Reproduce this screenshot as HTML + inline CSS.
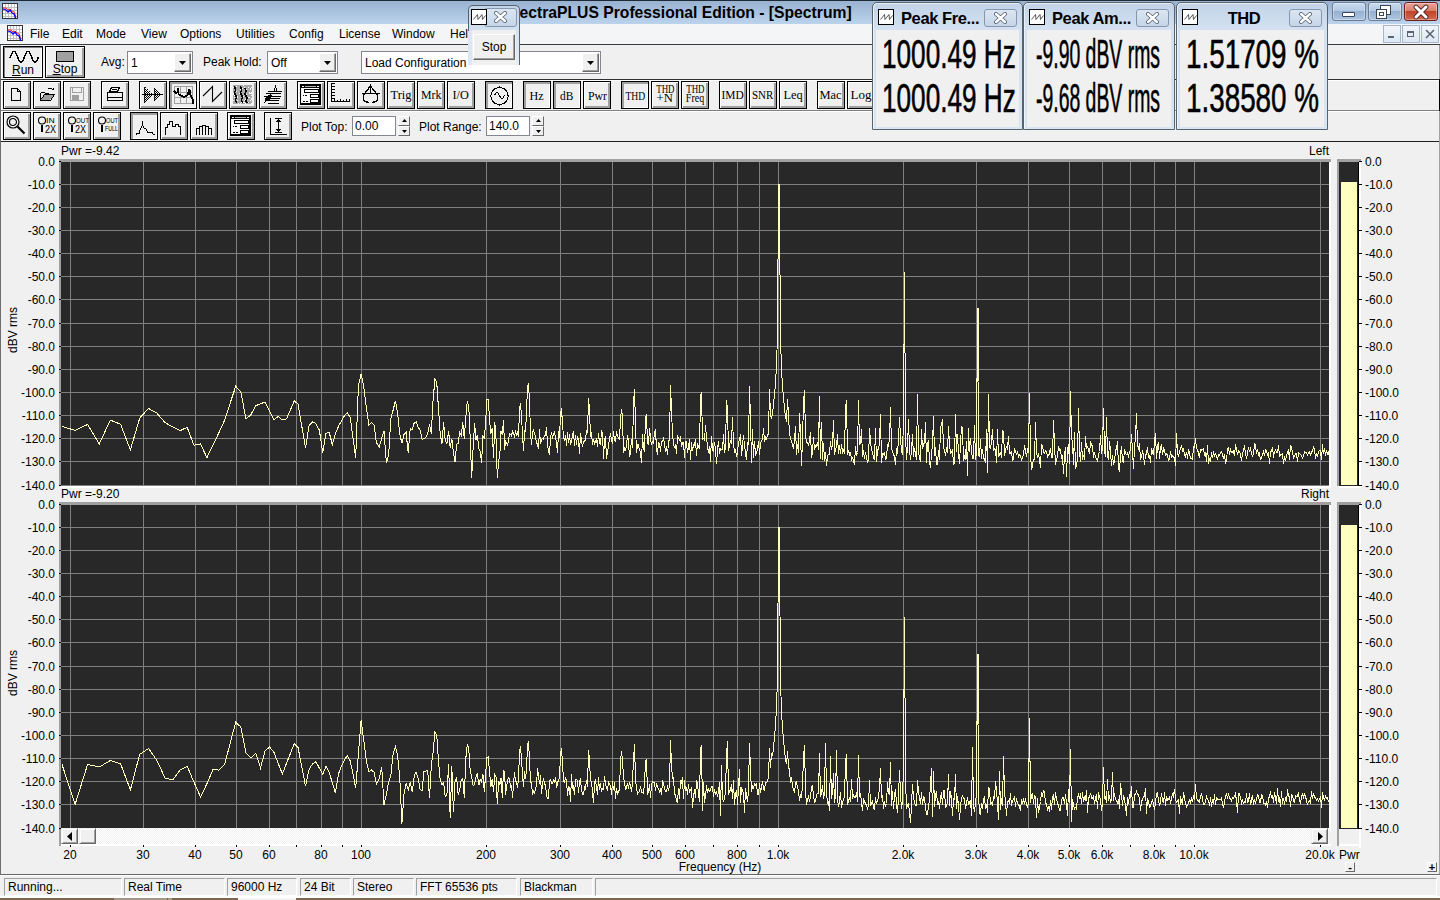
<!DOCTYPE html><html><head><meta charset="utf-8"><style>
*{margin:0;padding:0;box-sizing:border-box}
html,body{width:1440px;height:900px;overflow:hidden;background:#f0f0f0;font-family:"Liberation Sans", sans-serif;font-size:12px;color:#000;position:relative}
.a{position:absolute}
.t{position:absolute;white-space:nowrap;line-height:12px;font-size:12px}
</style></head><body>
<div class="a" style="left:0px;top:0px;width:1440px;height:1px;background:#1e2a36;"></div>
<div class="a" style="left:0px;top:1px;width:1440px;height:23px;background:linear-gradient(#98b2d0,#bcd3ec);"></div>
<svg class="a" style="left:2px;top:3px" width="16" height="16" viewBox="0 0 16 16" shape-rendering="crispEdges"><rect x="0.5" y="0.5" width="15" height="15" fill="#fff" stroke="#333"/><path d="M1 4.5h14M1 7.5h14M1 10.5h14M1 13.5h14M3.5 1v14M6.5 1v14M9.5 1v14M12.5 1v14" stroke="#c0c0c0"/><path d="M1 5l3 0 2 2 2-1 2 2 2 1 2 5" stroke="#ff2020" fill="none" shape-rendering="auto"/><path d="M1 6l3 1 2 2 2-2 2 3 2 1 2 5" stroke="#0000ff" fill="none" stroke-width="1.3" shape-rendering="auto"/></svg>
<div class="t" style="left:499.5px;top:5px;font-size:15.7px;line-height:16px;font-weight:bold">SpectraPLUS Professional Edition - [Spectrum]</div>
<div class="a" style="left:1332px;top:2px;width:34px;height:19px;background:linear-gradient(#c8daee 0,#b4cae4 45%,#95b0d0 50%,#adc5e2 100%);border:1px solid #6a7d93;border-radius:3px;box-shadow:inset 0 0 0 1px rgba(255,255,255,0.35)"></div>
<div class="a" style="left:1368px;top:2px;width:34px;height:19px;background:linear-gradient(#c8daee 0,#b4cae4 45%,#95b0d0 50%,#adc5e2 100%);border:1px solid #6a7d93;border-radius:3px;box-shadow:inset 0 0 0 1px rgba(255,255,255,0.35)"></div>
<div class="a" style="left:1404px;top:2px;width:34px;height:19px;background:linear-gradient(#e8a598 0,#d8806e 45%,#c0432a 50%,#d06a50 100%);border:1px solid #6e1c1c;border-radius:3px;box-shadow:inset 0 0 0 1px rgba(255,255,255,0.35)"></div>
<div class="a" style="left:1342px;top:12px;width:13px;height:5px;background:#fff;border:1px solid #3a4656;border-radius:1px"></div>
<div class="a" style="left:1380px;top:5px;width:11px;height:10px;border:1px solid #3a4656;background:#fff;box-shadow:inset 0 0 0 1px #fff"></div>
<div class="a" style="left:1376px;top:9px;width:11px;height:10px;border:1px solid #3a4656;background:#fff;box-shadow:inset 0 0 0 2px #fff, inset 0 0 0 3px #3a4656"></div>
<svg class="a" style="left:1412px;top:4px" width="18" height="16" viewBox="0 0 18 16"><path d="M4 3l10 10M14 3L4 13" stroke="#4a2020" stroke-width="4.6" stroke-linecap="round"/><path d="M4 3l10 10M14 3L4 13" stroke="#fff" stroke-width="3" stroke-linecap="round"/></svg>
<div class="a" style="left:0px;top:24px;width:1440px;height:20px;background:#f4f5f7;"></div>
<div class="a" style="left:0px;top:44px;width:1440px;height:1px;background:#3c3c3c;"></div>
<svg class="a" style="left:7px;top:25px" width="16" height="16" viewBox="0 0 16 16" shape-rendering="crispEdges"><rect x="0.5" y="0.5" width="15" height="15" fill="#fff" stroke="#333"/><path d="M1 4.5h14M1 7.5h14M1 10.5h14M1 13.5h14M3.5 1v14M6.5 1v14M9.5 1v14M12.5 1v14" stroke="#c0c0c0"/><path d="M1 5l3 0 2 2 2-1 2 2 2 1 2 5" stroke="#ff2020" fill="none" shape-rendering="auto"/><path d="M1 6l3 1 2 2 2-2 2 3 2 1 2 5" stroke="#0000ff" fill="none" stroke-width="1.3" shape-rendering="auto"/></svg>
<div class="t" style="left:30px;top:28px;">File</div>
<div class="t" style="left:62px;top:28px;">Edit</div>
<div class="t" style="left:96px;top:28px;">Mode</div>
<div class="t" style="left:141px;top:28px;">View</div>
<div class="t" style="left:180px;top:28px;">Options</div>
<div class="t" style="left:236px;top:28px;">Utilities</div>
<div class="t" style="left:289px;top:28px;">Config</div>
<div class="t" style="left:339px;top:28px;">License</div>
<div class="t" style="left:392px;top:28px;">Window</div>
<div class="t" style="left:450px;top:28px;">Help</div>
<div class="a" style="left:1383px;top:25px;width:18px;height:18px;background:linear-gradient(#f2f6fb,#dce7f3);border:1px solid #a6b7ca"></div>
<div class="a" style="left:1402px;top:25px;width:18px;height:18px;background:linear-gradient(#f2f6fb,#dce7f3);border:1px solid #a6b7ca"></div>
<div class="a" style="left:1421px;top:25px;width:18px;height:18px;background:linear-gradient(#f2f6fb,#dce7f3);border:1px solid #a6b7ca"></div>
<div class="a" style="left:1388px;top:36px;width:6px;height:2px;background:#5a6470"></div>
<div class="a" style="left:1407px;top:31px;width:7px;height:6px;border:1px solid #5a6470;border-top-width:2px"></div>
<svg class="a" style="left:1425px;top:29px" width="10" height="10"><path d="M1 1l8 8M9 1L1 9" stroke="#5a6470" stroke-width="1.6"/></svg>
<div class="a" style="left:0px;top:45px;width:1px;height:97px;background:#6d6d6d;"></div>
<div class="a" style="left:1px;top:45px;width:1px;height:96px;background:#fff;"></div>
<div class="a" style="left:1px;top:79px;width:1439px;height:1px;background:#303030;"></div>
<div class="a" style="left:1px;top:80px;width:1439px;height:1px;background:#fff;"></div>
<div class="a" style="left:1px;top:110px;width:1439px;height:1px;background:#808080;"></div>
<div class="a" style="left:1px;top:111px;width:1439px;height:1px;background:#fff;"></div>
<div class="a" style="left:1px;top:141px;width:1439px;height:1px;background:#202020;"></div>
<div class="a" style="left:3px;top:46px;width:40px;height:32px;background:#f0f0f0;border:1px solid #000;box-shadow:inset 2px 2px 0 #a0a0a0, inset -1px -1px 0 #fff"><div class="a" style="left:0;top:0;width:38px;height:30px;background:#f0f0f0;box-shadow:inset 1px 1px 0 #808080, inset -1px -1px 0 #fff"></div><svg class="a" style="left:0;top:0;" width="38" height="30" viewBox="0 0 38 30" shape-rendering="crispEdges" fill="none" stroke="#000" stroke-width="1"><path d="M6.00 11.05 L6.50 9.80 L7.00 8.55 L7.50 7.37 L8.00 6.31 L8.50 5.42 L9.00 4.75 L9.50 4.34 L10.00 4.20 L10.50 4.34 L11.00 4.75 L11.50 5.42 L12.00 6.31 L12.50 7.37 L13.00 8.55 L13.50 9.80 L14.00 11.05 L14.50 12.23 L15.00 13.29 L15.50 14.18 L16.00 14.85 L16.50 15.26 L17.00 15.40 L17.50 15.26 L18.00 14.85 L18.50 14.18 L19.00 13.29 L19.50 12.23 L20.00 11.05 L20.50 9.80 L21.00 8.55 L21.50 7.37 L22.00 6.31 L22.50 5.42 L23.00 4.75 L23.50 4.34 L24.00 4.20 L24.50 4.34 L25.00 4.75 L25.50 5.42 L26.00 6.31 L26.50 7.37 L27.00 8.55 L27.50 9.80 L28.00 11.05 L28.50 12.23 L29.00 13.29 L29.50 14.18 L30.00 14.85 L30.50 15.26 L31.00 15.40 L31.50 15.26 L32.00 14.85 L32.50 14.18 L33.00 13.29 L33.50 12.23 L34.00 11.05 L34.50 9.80" stroke="#000" stroke-width="1.4" fill="none"/></svg><div class="a" style="left:0;top:17px;width:38px;text-align:center;font-size:12px;line-height:12px"><u>R</u>un</div></div>
<div class="a" style="left:45px;top:46px;width:40px;height:32px;background:#f0f0f0;border:1px solid #000;box-shadow:inset 1px 1px 0 #fff, inset -2px -2px 0 #a0a0a0"><div class="a" style="left:10px;top:4px;width:18px;height:11px;background:#a0a0a0;border:1px solid #000"></div><div class="a" style="left:0;top:16px;width:38px;text-align:center;font-size:12px;line-height:12px"><u>S</u>top</div></div>
<div class="t" style="left:101px;top:56px;">Avg:</div>
<div class="t" style="left:203px;top:56px;">Peak Hold:</div>
<div class="a" style="left:127px;top:51px;width:66px;height:23px;background:#fff;border:1px solid #828790"><div class="t" style="left:3px;top:5px">1</div><div class="a" style="right:1px;top:1px;width:17px;height:19px;background:#f0f0f0;border:1px solid;border-color:#fff #696969 #696969 #fff;box-shadow:inset -1px -1px 0 #a0a0a0"></div><svg class="a" style="right:6px;top:9px" width="7" height="4"><path d="M0 0h7L3.5 4z" fill="#000"/></svg></div>
<div class="a" style="left:267px;top:51px;width:71px;height:23px;background:#fff;border:1px solid #828790"><div class="t" style="left:3px;top:5px">Off</div><div class="a" style="right:1px;top:1px;width:17px;height:19px;background:#f0f0f0;border:1px solid;border-color:#fff #696969 #696969 #fff;box-shadow:inset -1px -1px 0 #a0a0a0"></div><svg class="a" style="right:6px;top:9px" width="7" height="4"><path d="M0 0h7L3.5 4z" fill="#000"/></svg></div>
<div class="a" style="left:361px;top:51px;width:240px;height:23px;background:#fff;border:1px solid #828790"><div class="t" style="left:3px;top:5px">Load Configuration</div><div class="a" style="right:1px;top:1px;width:17px;height:19px;background:#f0f0f0;border:1px solid;border-color:#fff #696969 #696969 #fff;box-shadow:inset -1px -1px 0 #a0a0a0"></div><svg class="a" style="right:6px;top:9px" width="7" height="4"><path d="M0 0h7L3.5 4z" fill="#000"/></svg></div>
<div class="a" style="left:3px;top:81px;width:28px;height:28px;background:#f0f0f0;border:1px solid #000;box-shadow:inset 1px 1px 0 #fff, inset -2px -2px 0 #a0a0a0"><svg class="a" style="left:0;top:0;" width="26" height="26" viewBox="0 0 26 26" shape-rendering="crispEdges" fill="none" stroke="#000" stroke-width="1"><path d="M7.5 6.5h6l3 3v9h-9z" stroke="#000" stroke-width="1" fill="none"/><path d="M13.5 6.5v3h3" stroke="#000" stroke-width="1" fill="none"/></svg></div>
<div class="a" style="left:33px;top:81px;width:28px;height:28px;background:#f0f0f0;border:1px solid #000;box-shadow:inset 1px 1px 0 #fff, inset -2px -2px 0 #a0a0a0"><svg class="a" style="left:0;top:0;" width="26" height="26" viewBox="0 0 26 26" shape-rendering="crispEdges" fill="none" stroke="#000" stroke-width="1"><path d="M6.5 10.5h4l1 1h3v2" stroke="#000" stroke-width="1" fill="none"/><path d="M6.5 10.5v8h10l4-6h-10l-4 6" stroke="#000" stroke-width="1" fill="none"/><path d="M7 18l4-5.5h9l-4 5.5z" fill="#a0a0a0" stroke="none"/><path d="M13.5 7.5q2-3 5 0" stroke="#000" stroke-width="1" fill="none"/><path d="M17.5 7.5h2v-2" stroke="#000" stroke-width="1" fill="none"/></svg></div>
<div class="a" style="left:63px;top:81px;width:28px;height:28px;background:#f0f0f0;border:1px solid #000;box-shadow:inset 1px 1px 0 #fff, inset -2px -2px 0 #a0a0a0"><svg class="a" style="left:0;top:0;" width="26" height="26" viewBox="0 0 26 26" shape-rendering="crispEdges" fill="none" stroke="#000" stroke-width="1"><rect x="6.5" y="5.5" width="13" height="13" stroke="#a0a0a0"/><path d="M8.5 5.5v5h9v-5" stroke="#a0a0a0" stroke-width="1" fill="none"/><rect x="8" y="13" width="7" height="5" fill="#a0a0a0" stroke="none"/></svg></div>
<div class="a" style="left:101px;top:81px;width:28px;height:28px;background:#f0f0f0;border:1px solid #000;box-shadow:inset 1px 1px 0 #fff, inset -2px -2px 0 #a0a0a0"><svg class="a" style="left:0;top:0;" width="26" height="26" viewBox="0 0 26 26" shape-rendering="crispEdges" fill="none" stroke="#000" stroke-width="1"><path d="M9.5 5.5h8l-2 4h-8z" stroke="#000" stroke-width="1" fill="none"/><path d="M5.5 10.5h15v5h-15z" stroke="#000" stroke-width="1" fill="none"/><path d="M5.5 15.5v3h15v-3" stroke="#000" stroke-width="1" fill="none"/><path d="M10 7.5h5" stroke="#000" stroke-width="1" fill="none"/></svg></div>
<div class="a" style="left:139px;top:81px;width:28px;height:28px;background:#f0f0f0;border:1px solid #000;box-shadow:inset 1px 1px 0 #fff, inset -2px -2px 0 #a0a0a0"><svg class="a" style="left:0;top:0;" width="26" height="26" viewBox="0 0 26 26" shape-rendering="crispEdges" fill="none" stroke="#000" stroke-width="1"><path d="M5 5h1v1h-1zM4 6h1v1h-1zM5 7h1v1h-1zM7 7h1v1h-1zM4 8h1v1h-1zM6 8h1v1h-1zM5 9h1v1h-1zM7 9h1v1h-1zM9 9h1v1h-1zM4 10h1v1h-1zM6 10h1v1h-1zM8 10h1v1h-1zM5 11h1v1h-1zM7 11h1v1h-1zM9 11h1v1h-1zM11 11h1v1h-1zM4 12h1v1h-1zM6 12h1v1h-1zM8 12h1v1h-1zM10 12h1v1h-1zM5 13h1v1h-1zM7 13h1v1h-1zM9 13h1v1h-1zM11 13h1v1h-1zM4 14h1v1h-1zM6 14h1v1h-1zM8 14h1v1h-1zM10 14h1v1h-1zM5 15h1v1h-1zM7 15h1v1h-1zM9 15h1v1h-1zM4 16h1v1h-1zM6 16h1v1h-1zM8 16h1v1h-1zM5 17h1v1h-1zM7 17h1v1h-1zM4 18h1v1h-1zM6 18h1v1h-1zM5 19h1v1h-1zM4 20h1v1h-1z" fill="#000" stroke="none"/><path d="M14 6h1v1h-1zM15 7h1v1h-1zM14 8h1v1h-1zM16 8h1v1h-1zM15 9h1v1h-1zM17 9h1v1h-1zM14 10h1v1h-1zM16 10h1v1h-1zM18 10h1v1h-1zM15 11h1v1h-1zM17 11h1v1h-1zM19 11h1v1h-1zM14 12h1v1h-1zM16 12h1v1h-1zM18 12h1v1h-1zM20 12h1v1h-1zM15 13h1v1h-1zM17 13h1v1h-1zM19 13h1v1h-1zM14 14h1v1h-1zM16 14h1v1h-1zM18 14h1v1h-1zM15 15h1v1h-1zM17 15h1v1h-1zM14 16h1v1h-1zM16 16h1v1h-1zM15 17h1v1h-1zM14 18h1v1h-1z" fill="#000" stroke="none"/><path d="M2 12.5h21" stroke="#000" stroke-width="1" fill="none"/><path d="M4 5v16M14 7v12" stroke="#000" stroke-width="0.8" fill="none"/></svg></div>
<div class="a" style="left:169px;top:81px;width:28px;height:28px;background:#f0f0f0;border:1px solid #000;box-shadow:inset 2px 2px 0 #a0a0a0, inset -1px -1px 0 #fff"><svg class="a" style="left:0;top:0;" width="26" height="26" viewBox="0 0 26 26" shape-rendering="crispEdges" fill="none" stroke="#000" stroke-width="1"><path d="M4.5 4.5h18v17h-18zM10.5 4.5v17M16.5 4.5v17M4.5 10.5h18M4.5 15.5h18" stroke="#a0a0a0"/><path d="M4 9L6 11L8 10V6L8.5 12L12.5 14.5L14.5 15L17.5 13L19.5 7L20 12L23 18V22" stroke="#000" stroke-width="1.8" fill="none"/></svg></div>
<div class="a" style="left:199px;top:81px;width:28px;height:28px;background:#f0f0f0;border:1px solid #000;box-shadow:inset 1px 1px 0 #fff, inset -2px -2px 0 #a0a0a0"><svg class="a" style="left:0;top:0;" width="26" height="26" viewBox="0 0 26 26" shape-rendering="crispEdges" fill="none" stroke="#000" stroke-width="1"><path d="M3 14l9.5-9.5v15l9.5-9.5" stroke="#000" shape-rendering="auto" stroke-width="1.1" fill="none"/></svg></div>
<div class="a" style="left:229px;top:81px;width:28px;height:28px;background:#f0f0f0;border:1px solid #000;box-shadow:inset 1px 1px 0 #fff, inset -2px -2px 0 #a0a0a0"><svg class="a" style="left:0;top:0;" width="26" height="26" viewBox="0 0 26 26" shape-rendering="crispEdges" fill="none" stroke="#000" stroke-width="1"><rect x="3" y="3" width="19" height="19" fill="#a8a8a8" stroke="none"/><path d="M10 21h1v1h-1zM20 7h1v1h-1zM14 18h1v1h-1zM21 5h1v1h-1zM3 18h1v1h-1zM11 20h1v1h-1zM10 9h1v1h-1zM18 20h1v1h-1zM20 18h1v1h-1zM15 7h1v1h-1zM10 7h1v1h-1zM19 15h1v1h-1zM3 5h1v1h-1zM8 21h1v1h-1zM4 12h1v1h-1zM3 11h1v1h-1zM18 15h1v1h-1zM16 15h1v1h-1zM21 17h1v1h-1zM7 14h1v1h-1zM6 4h1v1h-1zM7 18h1v1h-1zM9 11h1v1h-1zM16 12h1v1h-1zM16 19h1v1h-1zM15 21h1v1h-1zM14 20h1v1h-1zM21 16h1v1h-1zM21 10h1v1h-1zM13 3h1v1h-1zM11 8h1v1h-1zM13 20h1v1h-1zM21 21h1v1h-1zM6 9h1v1h-1zM21 11h1v1h-1zM12 6h1v1h-1zM5 18h1v1h-1zM18 5h1v1h-1zM14 5h1v1h-1zM16 7h1v1h-1zM3 12h1v1h-1zM16 16h1v1h-1zM6 4h1v1h-1zM4 15h1v1h-1zM21 13h1v1h-1zM20 11h1v1h-1zM19 10h1v1h-1zM4 12h1v1h-1zM3 5h1v1h-1zM6 20h1v1h-1zM4 9h1v1h-1zM16 12h1v1h-1zM11 7h1v1h-1zM4 13h1v1h-1zM13 14h1v1h-1zM7 15h1v1h-1zM15 17h1v1h-1zM19 15h1v1h-1zM20 6h1v1h-1zM19 11h1v1h-1z" fill="#fff" stroke="none"/><path d="M4.5 4l1 4-1 3 2 4-1 3 1 3M10.5 4l1 4-1 3 2 4-1 3 1 3M15 6l1 3-1 3 2 4-1 3 1 2" stroke="#000" stroke-width="1.4" fill="none"/></svg></div>
<div class="a" style="left:259px;top:81px;width:28px;height:28px;background:#f0f0f0;border:1px solid #000;box-shadow:inset 1px 1px 0 #fff, inset -2px -2px 0 #a0a0a0"><svg class="a" style="left:0;top:0;" width="26" height="26" viewBox="0 0 26 26" shape-rendering="crispEdges" fill="none" stroke="#000" stroke-width="1"><path d="M8 9.5h14M6 11.5h15M4 14.5h17M5 16.5h15M6 18.5h13M8 21.5h11M14 9l1.5-4.5 1.5 5" stroke="#000" stroke-width="1" fill="none"/><path d="M4 21l2-5 2-3 3-1 1 2-2 2v2l-3 1z" fill="#000" stroke="none"/></svg></div>
<div class="a" style="left:297px;top:81px;width:28px;height:28px;background:#f0f0f0;border:1px solid #000;box-shadow:inset 1px 1px 0 #fff, inset -2px -2px 0 #a0a0a0"><svg class="a" style="left:0;top:0;" width="26" height="26" viewBox="0 0 26 26" shape-rendering="crispEdges" fill="none" stroke="#000" stroke-width="1"><path d="M2.5 2.5h20v20h-20z" stroke="#000" stroke-width="1" fill="none"/><path d="M21.5 3v19M3 21.5h19" stroke="#000" stroke-width="1" fill="none"/><rect x="3" y="3" width="19" height="3" fill="#000" stroke="none"/><path d="M4 4h2v1h-2zM19 4h2v1h-2z" fill="#fff" stroke="none"/><path d="M7 4.5h11" stroke="#fff" stroke-width="0.7" fill="none"/><rect x="4" y="6" width="17" height="15" fill="#fff" stroke="none"/><path d="M6.5 7.5h14v3h-14zM12.5 12.5h8v3h-8zM12.5 17.5h8v3h-8z" stroke="#000" stroke-width="1" fill="none"/><path d="M5 13.5h1M7 13.5h2M5 19.5h2M8 19.5h2" stroke="#000" stroke-width="1" fill="none"/></svg></div>
<div class="a" style="left:327px;top:81px;width:28px;height:28px;background:#f0f0f0;border:1px solid #000;box-shadow:inset 1px 1px 0 #fff, inset -2px -2px 0 #a0a0a0"><svg class="a" style="left:0;top:0;" width="26" height="26" viewBox="0 0 26 26" shape-rendering="crispEdges" fill="none" stroke="#000" stroke-width="1"><path d="M3.5 1v18.5h18.5M3.5 1.5h3M3.5 4.5h3M3.5 7.5h3M3.5 10.5h3M3.5 13.5h3M3.5 16.5h3M6.5 19.5v-3M9.5 19.5v-2M12.5 19.5v-3M15.5 19.5v-2M18.5 19.5v-3M21.5 19.5v-3" stroke="#000" stroke-width="1" fill="none"/></svg></div>
<div class="a" style="left:357px;top:81px;width:28px;height:28px;background:#f0f0f0;border:1px solid #000;box-shadow:inset 1px 1px 0 #fff, inset -2px -2px 0 #a0a0a0"><svg class="a" style="left:0;top:0;" width="26" height="26" viewBox="0 0 26 26" shape-rendering="crispEdges" fill="none" stroke="#000" stroke-width="1"><path d="M12.5 2v9" stroke="#000" stroke-width="1.6" fill="none"/><path d="M3.5 11.5h18" stroke="#000" stroke-width="1" fill="none"/><path d="M12.5 4L7 11Q4.5 15 5.5 18Q7 20.5 10.5 20M12.5 4L18 11Q20.5 15 19.5 18Q18 20.5 14.5 20" stroke="#000" stroke-width="1.3" fill="none"/></svg></div>
<div class="a" style="left:387px;top:81px;width:28px;height:28px;background:#f0f0f0;border:1px solid #000;box-shadow:inset 1px 1px 0 #fff, inset -2px -2px 0 #a0a0a0"><div class="a" style="left:0;top:6px;width:26px;text-align:center;line-height:13px;font-family:'Liberation Serif', serif;font-size:13px;white-space:nowrap"><span style="display:inline-block;transform:scaleX(0.955);transform-origin:center">Trig</span></div></div>
<div class="a" style="left:417px;top:81px;width:28px;height:28px;background:#f0f0f0;border:1px solid #000;box-shadow:inset 1px 1px 0 #fff, inset -2px -2px 0 #a0a0a0"><div class="a" style="left:0;top:6px;width:26px;text-align:center;line-height:13px;font-family:'Liberation Serif', serif;font-size:13px;white-space:nowrap"><span style="display:inline-block;transform:scaleX(0.913);transform-origin:center">Mrk</span></div></div>
<div class="a" style="left:447px;top:81px;width:28px;height:28px;background:#f0f0f0;border:1px solid #000;box-shadow:inset 1px 1px 0 #fff, inset -2px -2px 0 #a0a0a0"><div class="a" style="left:0;top:6px;width:26px;text-align:center;line-height:13px;font-family:'Liberation Serif', serif;font-size:13px;white-space:nowrap"><span style="display:inline-block;transform:scaleX(0.941);transform-origin:center">I/O</span></div></div>
<div class="a" style="left:523px;top:81px;width:28px;height:28px;background:#f0f0f0;border:1px solid #000;box-shadow:inset 2px 2px 0 #a0a0a0, inset -1px -1px 0 #fff"><div class="a" style="left:0;top:7px;width:26px;text-align:center;line-height:13px;font-family:'Liberation Serif', serif;font-size:13px;white-space:nowrap"><span style="display:inline-block;transform:scaleX(0.933);transform-origin:center">Hz</span></div></div>
<div class="a" style="left:553px;top:81px;width:28px;height:28px;background:#f0f0f0;border:1px solid #000;box-shadow:inset 2px 2px 0 #a0a0a0, inset -1px -1px 0 #fff"><div class="a" style="left:0;top:7px;width:26px;text-align:center;line-height:13px;font-family:'Liberation Serif', serif;font-size:13px;white-space:nowrap"><span style="display:inline-block;transform:scaleX(0.875);transform-origin:center">dB</span></div></div>
<div class="a" style="left:583px;top:81px;width:28px;height:28px;background:#f0f0f0;border:1px solid #000;box-shadow:inset 1px 1px 0 #fff, inset -2px -2px 0 #a0a0a0"><div class="a" style="left:0;top:7px;width:26px;text-align:center;line-height:13px;font-family:'Liberation Serif', serif;font-size:13px;white-space:nowrap"><span style="display:inline-block;transform:scaleX(0.909);transform-origin:center">Pwr</span></div></div>
<div class="a" style="left:621px;top:81px;width:28px;height:28px;background:#f0f0f0;border:1px solid #000;box-shadow:inset 2px 2px 0 #a0a0a0, inset -1px -1px 0 #fff"><div class="a" style="left:0;top:7px;width:26px;text-align:center;line-height:13px;font-family:'Liberation Serif', serif;font-size:13px;white-space:nowrap"><span style="display:inline-block;transform:scaleX(0.741);transform-origin:center">THD</span></div></div>
<div class="a" style="left:651px;top:81px;width:28px;height:28px;background:#f0f0f0;border:1px solid #000;box-shadow:inset 1px 1px 0 #fff, inset -2px -2px 0 #a0a0a0"><div class="a" style="left:0;top:1px;width:26px;text-align:center;line-height:12px;font-family:'Liberation Serif', serif;font-size:12px;white-space:nowrap"><span style="display:inline-block;transform:scaleX(0.741);transform-origin:center">THD</span></div><div class="a" style="left:0;top:10px;width:26px;text-align:center;line-height:12px;font-family:'Liberation Serif', serif;font-size:12px;white-space:nowrap"><span style="display:inline-block;transform:scaleX(1.059);transform-origin:center">+N</span></div></div>
<div class="a" style="left:681px;top:81px;width:28px;height:28px;background:#f0f0f0;border:1px solid #000;box-shadow:inset 1px 1px 0 #fff, inset -2px -2px 0 #a0a0a0"><div class="a" style="left:0;top:1px;width:26px;text-align:center;line-height:12px;font-family:'Liberation Serif', serif;font-size:12px;white-space:nowrap"><span style="display:inline-block;transform:scaleX(0.741);transform-origin:center">THD</span></div><div class="a" style="left:0;top:10px;width:26px;text-align:center;line-height:12px;font-family:'Liberation Serif', serif;font-size:12px;white-space:nowrap"><span style="display:inline-block;transform:scaleX(0.833);transform-origin:center">Freq</span></div></div>
<div class="a" style="left:719px;top:81px;width:28px;height:28px;background:#f0f0f0;border:1px solid #000;box-shadow:inset 1px 1px 0 #fff, inset -2px -2px 0 #a0a0a0"><div class="a" style="left:0;top:6px;width:26px;text-align:center;line-height:13px;font-family:'Liberation Serif', serif;font-size:13px;white-space:nowrap"><span style="display:inline-block;transform:scaleX(0.880);transform-origin:center">IMD</span></div></div>
<div class="a" style="left:749px;top:81px;width:28px;height:28px;background:#f0f0f0;border:1px solid #000;box-shadow:inset 1px 1px 0 #fff, inset -2px -2px 0 #a0a0a0"><div class="a" style="left:0;top:6px;width:26px;text-align:center;line-height:13px;font-family:'Liberation Serif', serif;font-size:13px;white-space:nowrap"><span style="display:inline-block;transform:scaleX(0.846);transform-origin:center">SNR</span></div></div>
<div class="a" style="left:779px;top:81px;width:28px;height:28px;background:#f0f0f0;border:1px solid #000;box-shadow:inset 1px 1px 0 #fff, inset -2px -2px 0 #a0a0a0"><div class="a" style="left:0;top:6px;width:26px;text-align:center;line-height:13px;font-family:'Liberation Serif', serif;font-size:13px;white-space:nowrap"><span style="display:inline-block;transform:scaleX(0.952);transform-origin:center">Leq</span></div></div>
<div class="a" style="left:817px;top:81px;width:28px;height:28px;background:#f0f0f0;border:1px solid #000;box-shadow:inset 1px 1px 0 #fff, inset -2px -2px 0 #a0a0a0"><div class="a" style="left:0;top:6px;width:26px;text-align:center;line-height:13px;font-family:'Liberation Serif', serif;font-size:13px;white-space:nowrap"><span style="display:inline-block;transform:scaleX(0.957);transform-origin:center">Mac</span></div></div>
<div class="a" style="left:847px;top:81px;width:28px;height:28px;background:#f0f0f0;border:1px solid #000;box-shadow:inset 1px 1px 0 #fff, inset -2px -2px 0 #a0a0a0"><div class="a" style="left:0;top:6px;width:26px;text-align:center;line-height:13px;font-family:'Liberation Serif', serif;font-size:13px;white-space:nowrap"><span style="display:inline-block;transform:scaleX(1.000);transform-origin:center">Log</span></div></div>
<div class="a" style="left:485px;top:81px;width:28px;height:28px;background:#f0f0f0;border:1px solid #000;box-shadow:inset 2px 2px 0 #a0a0a0, inset -1px -1px 0 #fff"><svg class="a" style="left:0;top:0;" width="26" height="26" viewBox="0 0 26 26" shape-rendering="crispEdges" fill="none" stroke="#000" stroke-width="1"><path d="M13.5 5.5a8.5 8.5 0 1 0 0.01 0" stroke="#000" stroke-width="1" fill="none"/><path d="M8.5 13.5q2.5-6 5 0t5 0" stroke="#000" stroke-width="1" fill="none"/><path d="M13.5 3.5v2M13.5 21.5v2" stroke="#000" stroke-width="1" fill="none"/></svg></div>
<div class="a" style="left:3px;top:112px;width:28px;height:28px;background:#f0f0f0;border:1px solid #000;box-shadow:inset 1px 1px 0 #fff, inset -2px -2px 0 #a0a0a0"><svg class="a" style="left:0;top:0;" width="26" height="26" viewBox="0 0 26 26" shape-rendering="crispEdges" fill="none" stroke="#000" stroke-width="1"><path shape-rendering="auto" d="M3 9a6 6 0 1 0 12 0a6 6 0 1 0-12 0" stroke="#000" stroke-width="1.2" fill="none"/><path shape-rendering="auto" d="M5.5 9a3.5 3.5 0 1 0 7 0a3.5 3.5 0 1 0-7 0" stroke="#000" stroke-width="1.1" fill="none"/><path shape-rendering="auto" d="M13.5 13.5l7 7" stroke="#000" stroke-width="2.2" fill="none"/></svg></div>
<div class="a" style="left:33px;top:112px;width:28px;height:28px;background:#f0f0f0;border:1px solid #000;box-shadow:inset 1px 1px 0 #fff, inset -2px -2px 0 #a0a0a0"><svg class="a" style="left:0;top:0;" width="26" height="26" viewBox="0 0 26 26" shape-rendering="crispEdges" fill="none" stroke="#000" stroke-width="1"><path shape-rendering="auto" d="M4.5 7.5a3.5 3.5 0 1 0 7 0a3.5 3.5 0 1 0-7 0" stroke="#000" stroke-width="1.1" fill="none"/><path d="M8 12v7" stroke="#000" stroke-width="2" fill="none"/><text x="12" y="10" font-family="Liberation Sans" font-size="6.5" textLength="8.6" lengthAdjust="spacingAndGlyphs" fill="#000" stroke="none">IN</text><text x="11" y="20" font-family="Liberation Sans" font-size="10" textLength="11" lengthAdjust="spacingAndGlyphs" fill="#000" stroke="none">2X</text></svg></div>
<div class="a" style="left:63px;top:112px;width:28px;height:28px;background:#f0f0f0;border:1px solid #000;box-shadow:inset 1px 1px 0 #fff, inset -2px -2px 0 #a0a0a0"><svg class="a" style="left:0;top:0;" width="26" height="26" viewBox="0 0 26 26" shape-rendering="crispEdges" fill="none" stroke="#000" stroke-width="1"><path shape-rendering="auto" d="M4.5 7.5a3.5 3.5 0 1 0 7 0a3.5 3.5 0 1 0-7 0" stroke="#000" stroke-width="1.1" fill="none"/><path d="M8 12v7" stroke="#000" stroke-width="2" fill="none"/><text x="12" y="10" font-family="Liberation Sans" font-size="6.5" textLength="12.899999999999999" lengthAdjust="spacingAndGlyphs" fill="#000" stroke="none">OUT</text><text x="11" y="20" font-family="Liberation Sans" font-size="10" textLength="11" lengthAdjust="spacingAndGlyphs" fill="#000" stroke="none">2X</text></svg></div>
<div class="a" style="left:93px;top:112px;width:28px;height:28px;background:#f0f0f0;border:1px solid #000;box-shadow:inset 1px 1px 0 #fff, inset -2px -2px 0 #a0a0a0"><svg class="a" style="left:0;top:0;" width="26" height="26" viewBox="0 0 26 26" shape-rendering="crispEdges" fill="none" stroke="#000" stroke-width="1"><path shape-rendering="auto" d="M4.5 7.5a3.5 3.5 0 1 0 7 0a3.5 3.5 0 1 0-7 0" stroke="#000" stroke-width="1.1" fill="none"/><path d="M8 12v7" stroke="#000" stroke-width="2" fill="none"/><text x="12" y="10" font-family="Liberation Sans" font-size="6.5" textLength="12" lengthAdjust="spacingAndGlyphs" fill="#000" stroke="none">OUT</text><text x="11" y="18" font-family="Liberation Sans" font-size="6.5" textLength="13" lengthAdjust="spacingAndGlyphs" fill="#000" stroke="none">FULL</text></svg></div>
<div class="a" style="left:130px;top:112px;width:28px;height:28px;background:#f0f0f0;border:1px solid #000;box-shadow:inset 2px 2px 0 #a0a0a0, inset -1px -1px 0 #fff"><svg class="a" style="left:0;top:0;" width="26" height="26" viewBox="0 0 26 26" shape-rendering="crispEdges" fill="none" stroke="#000" stroke-width="1"><path d="M5.5 22v-2h3v-2l2-4 1-2v-4M11.5 12l1.5 3 2 1 1.5 3h4l1.5 2h1.5" stroke="#000" stroke-width="1" fill="none"/></svg></div>
<div class="a" style="left:160px;top:112px;width:28px;height:28px;background:#f0f0f0;border:1px solid #000;box-shadow:inset 1px 1px 0 #fff, inset -2px -2px 0 #a0a0a0"><svg class="a" style="left:0;top:0;" width="26" height="26" viewBox="0 0 26 26" shape-rendering="crispEdges" fill="none" stroke="#000" stroke-width="1"><path d="M4.5 22v-8h2v-3h2v-3h3v5h3v-2h3v2h2v9" stroke="#000" stroke-width="1" fill="none"/></svg></div>
<div class="a" style="left:190px;top:112px;width:28px;height:28px;background:#f0f0f0;border:1px solid #000;box-shadow:inset 1px 1px 0 #fff, inset -2px -2px 0 #a0a0a0"><svg class="a" style="left:0;top:0;" width="26" height="26" viewBox="0 0 26 26" shape-rendering="crispEdges" fill="none" stroke="#000" stroke-width="1"><path d="M5.5 22v-7M8.5 22v-9M11.5 22v-10M14.5 22v-10M17.5 22v-9M20.5 22v-7M5.5 15h3v-2h3v-1h3v1h3v2h3" stroke="#000" stroke-width="1" fill="none"/></svg></div>
<div class="a" style="left:227px;top:112px;width:28px;height:28px;background:#f0f0f0;border:1px solid #000;box-shadow:inset 1px 1px 0 #fff, inset -2px -2px 0 #a0a0a0"><svg class="a" style="left:0;top:0;" width="26" height="26" viewBox="0 0 26 26" shape-rendering="crispEdges" fill="none" stroke="#000" stroke-width="1"><path d="M2.5 2.5h20v20h-20z" stroke="#000" stroke-width="1" fill="none"/><path d="M21.5 3v19M3 21.5h19" stroke="#000" stroke-width="1" fill="none"/><rect x="3" y="3" width="19" height="3" fill="#000" stroke="none"/><path d="M4 4h2v1h-2zM19 4h2v1h-2z" fill="#fff" stroke="none"/><path d="M7 4.5h11" stroke="#fff" stroke-width="0.7" fill="none"/><rect x="4" y="6" width="17" height="15" fill="#fff" stroke="none"/><path d="M6.5 7.5h14v3h-14zM12.5 12.5h8v3h-8zM12.5 17.5h8v3h-8z" stroke="#000" stroke-width="1" fill="none"/><path d="M5 13.5h1M7 13.5h2M5 19.5h2M8 19.5h2" stroke="#000" stroke-width="1" fill="none"/></svg></div>
<div class="a" style="left:264px;top:112px;width:28px;height:28px;background:#f0f0f0;border:1px solid #000;box-shadow:inset 1px 1px 0 #fff, inset -2px -2px 0 #a0a0a0"><svg class="a" style="left:0;top:0;" width="26" height="26" viewBox="0 0 26 26" shape-rendering="crispEdges" fill="none" stroke="#000" stroke-width="1"><path d="M5.5 4.5v17h16" stroke="#000" stroke-width="1" fill="none"/><path d="M9.5 5.5h7M9.5 19.5h7M13.5 6v13" stroke="#000" stroke-width="1" fill="none"/><path d="M11 9l2.5-3 2.5 3zM11 16l2.5 3 2.5-3z" fill="#000" stroke="none"/></svg></div>
<div class="t" style="left:301px;top:121px;">Plot Top:</div>
<div class="t" style="left:419px;top:121px;">Plot Range:</div>
<div class="a" style="left:352px;top:116px;width:44px;height:20px;background:#fff;border:1px solid #828790"><div class="t" style="left:2px;top:3px">0.00</div></div>
<div class="a" style="left:398px;top:116px;width:12px;height:10px;background:#f0f0f0;border:1px solid;border-color:#fff #696969 #696969 #fff"></div>
<div class="a" style="left:398px;top:126px;width:12px;height:10px;background:#f0f0f0;border:1px solid;border-color:#fff #696969 #696969 #fff"></div>
<svg class="a" style="left:402px;top:119px" width="5" height="14"><path d="M0 3h5L2.5 0zM0 11h5L2.5 14z" fill="#000"/></svg>
<div class="a" style="left:486px;top:116px;width:44px;height:20px;background:#fff;border:1px solid #828790"><div class="t" style="left:2px;top:3px">140.0</div></div>
<div class="a" style="left:532px;top:116px;width:12px;height:10px;background:#f0f0f0;border:1px solid;border-color:#fff #696969 #696969 #fff"></div>
<div class="a" style="left:532px;top:126px;width:12px;height:10px;background:#f0f0f0;border:1px solid;border-color:#fff #696969 #696969 #fff"></div>
<svg class="a" style="left:536px;top:119px" width="5" height="14"><path d="M0 3h5L2.5 0zM0 11h5L2.5 14z" fill="#000"/></svg>
<div class="t" style="left:61px;top:145px;">Pwr =-9.42</div>
<div class="t" style="right:111px;top:145px;text-align:right;">Left</div>
<div class="a" style="left:59px;top:159px;width:1272px;height:3px;background:#a0a0a0;"></div>
<div class="a" style="left:59px;top:159px;width:2px;height:327px;background:#a0a0a0;"></div>
<div class="a" style="left:1329px;top:162px;width:2px;height:324px;background:#fff;"></div>
<div class="a" style="left:61px;top:486px;width:1270px;height:2px;background:#fff;"></div>
<div class="a" style="left:61px;top:162px;width:1268px;height:324px;background:#282828;"></div>
<div class="a" style="left:61px;top:184px;width:1268px;height:1px;background:#808080;"></div>
<div class="a" style="left:61px;top:207px;width:1268px;height:1px;background:#808080;"></div>
<div class="a" style="left:61px;top:230px;width:1268px;height:1px;background:#808080;"></div>
<div class="a" style="left:61px;top:253px;width:1268px;height:1px;background:#808080;"></div>
<div class="a" style="left:61px;top:276px;width:1268px;height:1px;background:#808080;"></div>
<div class="a" style="left:61px;top:299px;width:1268px;height:1px;background:#808080;"></div>
<div class="a" style="left:61px;top:323px;width:1268px;height:1px;background:#808080;"></div>
<div class="a" style="left:61px;top:346px;width:1268px;height:1px;background:#808080;"></div>
<div class="a" style="left:61px;top:369px;width:1268px;height:1px;background:#808080;"></div>
<div class="a" style="left:61px;top:392px;width:1268px;height:1px;background:#808080;"></div>
<div class="a" style="left:61px;top:415px;width:1268px;height:1px;background:#808080;"></div>
<div class="a" style="left:61px;top:438px;width:1268px;height:1px;background:#808080;"></div>
<div class="a" style="left:61px;top:461px;width:1268px;height:1px;background:#808080;"></div>
<div class="a" style="left:61px;top:485px;width:1268px;height:1px;background:#808080;"></div>
<div class="a" style="left:70px;top:162px;width:1px;height:324px;background:#808080;"></div>
<div class="a" style="left:143px;top:162px;width:1px;height:324px;background:#808080;"></div>
<div class="a" style="left:195px;top:162px;width:1px;height:324px;background:#808080;"></div>
<div class="a" style="left:236px;top:162px;width:1px;height:324px;background:#808080;"></div>
<div class="a" style="left:269px;top:162px;width:1px;height:324px;background:#808080;"></div>
<div class="a" style="left:296px;top:162px;width:1px;height:324px;background:#808080;"></div>
<div class="a" style="left:321px;top:162px;width:1px;height:324px;background:#808080;"></div>
<div class="a" style="left:342px;top:162px;width:1px;height:324px;background:#808080;"></div>
<div class="a" style="left:361px;top:162px;width:1px;height:324px;background:#808080;"></div>
<div class="a" style="left:486px;top:162px;width:1px;height:324px;background:#808080;"></div>
<div class="a" style="left:560px;top:162px;width:1px;height:324px;background:#808080;"></div>
<div class="a" style="left:612px;top:162px;width:1px;height:324px;background:#808080;"></div>
<div class="a" style="left:652px;top:162px;width:1px;height:324px;background:#808080;"></div>
<div class="a" style="left:685px;top:162px;width:1px;height:324px;background:#808080;"></div>
<div class="a" style="left:713px;top:162px;width:1px;height:324px;background:#808080;"></div>
<div class="a" style="left:737px;top:162px;width:1px;height:324px;background:#808080;"></div>
<div class="a" style="left:759px;top:162px;width:1px;height:324px;background:#808080;"></div>
<div class="a" style="left:778px;top:162px;width:1px;height:324px;background:#808080;"></div>
<div class="a" style="left:903px;top:162px;width:1px;height:324px;background:#808080;"></div>
<div class="a" style="left:976px;top:162px;width:1px;height:324px;background:#808080;"></div>
<div class="a" style="left:1028px;top:162px;width:1px;height:324px;background:#808080;"></div>
<div class="a" style="left:1069px;top:162px;width:1px;height:324px;background:#808080;"></div>
<div class="a" style="left:1102px;top:162px;width:1px;height:324px;background:#808080;"></div>
<div class="a" style="left:1130px;top:162px;width:1px;height:324px;background:#808080;"></div>
<div class="a" style="left:1154px;top:162px;width:1px;height:324px;background:#808080;"></div>
<div class="a" style="left:1175px;top:162px;width:1px;height:324px;background:#808080;"></div>
<div class="a" style="left:1194px;top:162px;width:1px;height:324px;background:#808080;"></div>
<div class="a" style="left:1320px;top:162px;width:1px;height:324px;background:#808080;"></div>
<div class="t" style="right:1385px;top:156px;text-align:right;">0.0</div>
<div class="a" style="left:59px;top:161px;width:2px;height:1px;background:#000;"></div>
<div class="t" style="right:1385px;top:179px;text-align:right;">-10.0</div>
<div class="a" style="left:59px;top:184px;width:2px;height:1px;background:#000;"></div>
<div class="t" style="right:1385px;top:202px;text-align:right;">-20.0</div>
<div class="a" style="left:59px;top:207px;width:2px;height:1px;background:#000;"></div>
<div class="t" style="right:1385px;top:225px;text-align:right;">-30.0</div>
<div class="a" style="left:59px;top:230px;width:2px;height:1px;background:#000;"></div>
<div class="t" style="right:1385px;top:248px;text-align:right;">-40.0</div>
<div class="a" style="left:59px;top:253px;width:2px;height:1px;background:#000;"></div>
<div class="t" style="right:1385px;top:271px;text-align:right;">-50.0</div>
<div class="a" style="left:59px;top:276px;width:2px;height:1px;background:#000;"></div>
<div class="t" style="right:1385px;top:294px;text-align:right;">-60.0</div>
<div class="a" style="left:59px;top:299px;width:2px;height:1px;background:#000;"></div>
<div class="t" style="right:1385px;top:318px;text-align:right;">-70.0</div>
<div class="a" style="left:59px;top:323px;width:2px;height:1px;background:#000;"></div>
<div class="t" style="right:1385px;top:341px;text-align:right;">-80.0</div>
<div class="a" style="left:59px;top:346px;width:2px;height:1px;background:#000;"></div>
<div class="t" style="right:1385px;top:364px;text-align:right;">-90.0</div>
<div class="a" style="left:59px;top:369px;width:2px;height:1px;background:#000;"></div>
<div class="t" style="right:1385px;top:387px;text-align:right;">-100.0</div>
<div class="a" style="left:59px;top:392px;width:2px;height:1px;background:#000;"></div>
<div class="t" style="right:1385px;top:410px;text-align:right;">-110.0</div>
<div class="a" style="left:59px;top:415px;width:2px;height:1px;background:#000;"></div>
<div class="t" style="right:1385px;top:433px;text-align:right;">-120.0</div>
<div class="a" style="left:59px;top:438px;width:2px;height:1px;background:#000;"></div>
<div class="t" style="right:1385px;top:456px;text-align:right;">-130.0</div>
<div class="a" style="left:59px;top:461px;width:2px;height:1px;background:#000;"></div>
<div class="t" style="right:1385px;top:480px;text-align:right;">-140.0</div>
<div class="a" style="left:59px;top:485px;width:2px;height:1px;background:#000;"></div>
<svg class="a" style="left:61px;top:162px;overflow:hidden" width="1268" height="324" viewBox="61 162 1268 324" shape-rendering="crispEdges"><path d="M61.7 426.4 L75.1 430.4 87.6 424.5 99.3 443.9 110.3 420.1 120.6 424.3 130.4 449.9 139.7 418.1 148.5 408.4 156.9 413.1 165.0 422.5 172.7 427.0 180.1 430.7 187.2 427.3 194.0 445.3 200.6 444.0 206.9 457.7 213.1 444.9 219.0 432.5 224.7 420.1 230.3 402.7 235.7 386.3 240.9 392.0 246.0 419.2 251.0 414.4 255.8 405.7 260.5 403.8 265.1 402.0 269.6 411.4 273.9 419.6 278.2 416.4 282.4 419.9 286.4 419.0 290.4 410.0 294.3 400.7 298.1 404.3 301.8 426.2 305.5 448.2 309.1 425.4 312.6 421.8 316.0 423.8 319.4 430.3 322.7 453.1 326.0 433.4 329.2 432.2 332.3 444.8 335.4 433.8 338.5 426.3 341.5 420.9 344.4 415.7 347.3 412.6 350.2 417.3 353.0 438.0 355.7 457.5 358.4 385.6 361.1 374.0 363.8 387.2 366.4 408.4 368.9 424.7 371.5 422.8 374.0 424.9 376.4 442.7 379.3 446.9 381.7 438.4 384.0 431.0 386.4 463.2 388.7 453.9 390.9 418.1 393.2 409.8 395.4 401.0 397.6 413.1 399.8 434.4 401.9 443.2 404.0 434.6 406.1 432.4 408.2 453.2 410.2 428.8 412.3 429.6 414.3 422.6 416.2 421.9 418.2 427.3 420.1 429.9 422.0 439.3 423.9 438.8 425.8 437.4 427.7 433.9 429.5 424.4 431.3 433.7 433.1 399.8 434.9 379.5 436.7 381.8 438.4 407.1 440.1 432.4 441.9 444.4 443.6 422.0 445.2 440.5 446.9 443.7 448.6 431.2 450.2 448.1 451.8 438.6 453.4 452.6 455.0 461.8 456.6 444.5 458.2 443.3 459.7 432.3 461.3 435.5 462.8 422.5 464.3 438.8 465.8 416.9 467.3 401.3 468.8 407.5 470.2 437.6 471.7 478.1 473.1 447.9 474.6 422.9 476.0 439.7 477.4 434.8 478.8 448.6 480.2 451.6 481.6 462.9 482.9 435.4 484.3 439.0 485.6 422.2 487.0 399.4 488.3 399.1 489.6 420.6 490.9 433.9 492.2 427.7 493.5 458.3 494.8 422.5 496.0 439.0 497.3 478.3 498.6 460.8 499.8 454.8 501.0 431.5 502.3 435.0 503.5 420.0 504.7 449.6 505.5 441.1 507.5 444.9 508.5 441.0 509.5 433.4 510.5 434.2 511.5 436.2 512.5 431.1 514.5 436.7 515.5 431.8 516.5 434.9 517.5 432.6 518.5 437.2 519.5 409.5 520.5 402.7 521.5 416.9 523.5 451.0 524.5 431.0 525.5 431.6 526.5 412.8 527.5 386.6 528.5 383.1 529.5 402.0 530.5 432.0 531.5 445.4 532.5 433.9 533.5 429.1 534.5 433.9 535.5 436.1 536.5 442.8 537.5 444.4 538.5 449.4 539.5 429.3 540.5 444.1 541.5 439.9 542.5 438.3 543.5 439.1 544.5 435.4 545.5 435.6 546.5 427.5 547.5 443.1 548.5 452.0 549.5 453.9 550.5 438.8 551.5 431.7 552.5 438.9 553.5 433.9 554.5 432.3 555.5 436.8 556.5 442.3 557.5 453.3 558.5 431.5 559.5 438.0 560.5 414.1 561.5 408.5 562.5 424.0 563.5 436.6 564.5 441.1 565.5 434.7 566.5 445.8 567.5 431.9 568.5 443.1 569.5 434.3 570.5 444.9 571.5 440.6 572.5 436.0 573.5 431.1 574.5 445.6 575.5 435.5 576.5 444.7 577.5 435.6 578.5 440.4 579.5 454.1 580.5 432.9 581.5 440.6 582.5 446.5 583.5 442.1 584.5 440.7 585.5 440.7 586.5 430.0 587.5 433.4 588.5 397.8 589.5 409.8 590.5 437.3 591.5 432.0 592.5 445.0 593.5 439.1 594.5 443.8 595.5 441.7 596.5 438.0 597.5 447.0 598.5 432.8 599.5 442.4 600.5 444.6 601.5 431.0 602.5 432.5 603.5 458.9 604.5 440.7 605.5 436.4 606.5 459.2 607.5 451.6 608.5 446.0 609.5 438.4 610.5 433.0 611.5 440.7 612.5 443.6 613.5 431.5 614.5 440.4 615.5 441.0 616.5 430.7 617.5 436.4 618.5 438.1 619.5 438.9 620.5 420.2 621.5 408.8 622.5 417.6 623.5 452.8 624.5 448.3 625.5 450.3 626.5 446.4 627.5 434.6 628.5 442.0 629.5 457.2 630.5 452.5 631.5 438.9 632.5 448.0 633.5 404.2 634.5 388.9 635.5 424.1 636.5 453.3 637.5 444.7 638.5 444.8 639.5 450.3 640.5 451.8 641.5 463.4 642.5 434.5 643.5 448.7 644.5 451.6 645.5 417.6 646.5 413.8 647.5 443.0 648.5 445.2 649.5 427.8 650.5 437.6 651.5 445.4 652.5 441.6 653.5 443.3 654.5 431.5 655.5 430.2 656.5 448.2 657.5 455.1 658.5 441.6 659.5 445.0 660.5 451.7 661.5 441.4 662.5 441.3 663.5 438.6 664.5 443.6 665.5 452.0 666.5 445.9 667.5 455.2 668.5 442.2 669.5 439.0 670.5 385.2 671.5 409.9 672.5 434.6 673.5 444.0 674.5 448.2 675.5 444.3 676.5 453.8 677.5 435.7 678.5 437.5 679.5 439.8 680.5 437.6 681.5 446.5 682.5 442.8 683.5 442.2 684.5 457.5 685.5 441.3 686.5 441.6 687.5 453.1 688.5 446.2 689.5 439.2 690.5 460.1 691.5 442.4 692.5 451.1 693.5 444.3 694.5 445.1 695.5 439.0 696.5 456.2 697.5 442.9 698.5 447.1 699.5 449.0 700.5 397.0 701.5 392.1 702.5 439.2 703.5 438.3 704.5 440.2 705.5 425.2 706.5 438.9 707.5 445.5 708.5 453.4 709.5 445.7 710.5 461.8 711.5 435.7 712.5 450.5 713.5 451.2 714.5 441.8 715.5 449.4 716.5 464.0 717.5 449.6 718.5 440.6 719.5 454.0 720.5 448.5 721.5 449.8 722.5 449.6 723.5 434.3 724.5 453.0 725.5 447.8 726.5 399.9 727.5 408.7 728.5 451.0 729.5 445.3 730.5 441.4 731.5 444.0 732.5 417.1 733.5 444.7 734.5 451.3 735.5 448.8 736.5 457.3 737.5 452.3 738.5 442.2 739.5 440.4 740.5 433.8 741.5 456.4 742.5 445.9 743.5 435.1 744.5 445.6 745.5 452.9 746.5 460.4 747.5 443.0 748.5 445.0 749.5 386.3 750.5 419.6 751.5 462.6 752.5 429.2 753.5 457.7 754.5 440.9 755.5 455.2 756.5 453.4 757.5 449.1 758.5 441.3 759.5 455.2 760.5 443.6 761.5 440.8 762.5 439.8 763.5 428.0 764.5 442.1 765.5 437.3 766.5 438.7 767.5 436.0 768.5 433.2 769.5 389.1 770.5 415.1 771.5 418.4 772.5 413.4 773.5 404.8 774.5 393.9 775.5 383.6 776.5 364.7 777.5 335.3 778.5 188.3 779.5 207.2 780.5 338.9 781.5 368.5 782.5 386.2 783.5 396.8 784.5 408.6 785.5 416.6 786.5 421.8 787.5 399.1 788.5 414.2 789.5 434.3 790.5 437.4 791.5 441.8 792.5 444.2 793.5 448.7 794.5 440.2 795.5 425.7 796.5 455.1 797.5 443.9 798.5 453.4 799.5 412.6 800.5 433.7 801.5 465.7 802.5 440.0 803.5 402.6 804.5 390.4 805.5 435.6 806.5 442.6 807.5 442.3 808.5 446.4 809.5 439.7 810.5 432.0 811.5 457.9 812.5 452.3 813.5 436.7 814.5 450.3 815.5 445.6 816.5 446.7 817.5 441.7 818.5 449.7 819.5 396.3 820.5 459.3 821.5 421.9 822.5 459.5 823.5 442.7 824.5 460.6 825.5 451.7 826.5 466.0 827.5 456.0 828.5 454.3 829.5 454.1 830.5 440.7 831.5 450.0 832.5 444.7 833.5 420.1 834.5 455.0 835.5 449.7 836.5 446.4 837.5 434.3 838.5 454.3 839.5 445.2 840.5 454.2 841.5 444.3 842.5 452.4 843.5 450.2 844.5 453.8 845.5 407.8 846.5 400.3 847.5 455.3 848.5 450.5 849.5 454.4 850.5 451.7 851.5 460.7 852.5 456.8 853.5 461.4 854.5 464.8 855.5 446.1 856.5 454.7 857.5 452.5 858.5 400.2 859.5 444.8 860.5 442.8 861.5 428.7 862.5 457.2 863.5 450.2 864.5 458.7 865.5 451.6 866.5 458.1 867.5 462.1 868.5 460.2 869.5 428.0 870.5 441.5 871.5 449.9 872.5 451.7 873.5 457.7 874.5 459.7 875.5 428.2 876.5 462.0 877.5 449.8 878.5 449.6 879.5 442.2 880.5 414.2 881.5 463.3 882.5 453.8 883.5 454.5 884.5 451.7 885.5 459.4 886.5 457.8 887.5 444.9 888.5 446.4 889.5 438.6 890.5 407.5 891.5 447.8 892.5 451.5 893.5 453.9 894.5 457.2 895.5 465.1 896.5 448.3 897.5 454.4 898.5 438.4 899.5 417.3 900.5 438.3 901.5 451.8 902.5 453.6 903.5 418.8 904.5 272.1 905.5 433.2 906.5 459.5 907.5 446.8 908.5 418.7 909.5 450.6 910.5 459.6 911.5 450.8 912.5 434.5 913.5 456.7 914.5 448.3 915.5 453.1 916.5 460.0 917.5 394.3 918.5 452.8 919.5 457.2 920.5 462.2 921.5 429.3 922.5 449.2 923.5 444.0 924.5 443.6 925.5 422.0 926.5 462.6 927.5 442.9 928.5 440.5 929.5 462.5 930.5 468.0 931.5 453.8 932.5 444.4 933.5 416.4 934.5 456.2 935.5 447.4 936.5 464.2 937.5 464.8 938.5 450.5 939.5 460.1 940.5 428.2 941.5 424.6 942.5 419.2 943.5 448.1 944.5 450.5 945.5 456.2 946.5 447.5 947.5 453.1 948.5 426.3 949.5 444.5 950.5 453.2 951.5 452.9 952.5 448.9 953.5 464.3 954.5 462.5 955.5 414.3 956.5 452.1 957.5 434.4 958.5 453.4 959.5 463.8 960.5 443.8 961.5 425.9 962.5 428.2 963.5 461.1 964.5 456.4 965.5 458.4 966.5 440.6 967.5 476.3 968.5 427.8 969.5 452.3 970.5 438.3 971.5 451.3 972.5 458.0 973.5 458.0 974.5 425.2 975.5 460.0 976.5 451.4 977.5 308.4 978.5 455.0 979.5 457.1 980.5 438.7 981.5 459.0 982.5 449.3 983.5 458.9 984.5 458.9 985.5 462.5 986.5 429.4 987.5 473.2 988.5 394.1 989.5 446.0 990.5 448.8 991.5 441.1 992.5 429.5 993.5 450.7 994.5 448.6 995.5 449.5 996.5 462.8 997.5 429.2 998.5 457.4 999.5 453.7 1000.5 453.0 1001.5 457.5 1002.5 430.5 1003.5 431.4 1004.5 455.9 1005.5 450.2 1006.5 446.7 1007.5 448.8 1008.5 435.8 1009.5 453.7 1010.5 453.7 1011.5 450.8 1012.5 460.3 1013.5 458.8 1014.5 448.1 1015.5 451.0 1016.5 455.1 1017.5 451.2 1018.5 457.1 1019.5 454.8 1020.5 455.6 1021.5 459.7 1022.5 458.3 1023.5 454.0 1024.5 445.5 1025.5 451.4 1026.5 457.0 1027.5 448.4 1028.5 453.3 1029.5 392.6 1030.5 454.1 1031.5 470.1 1032.5 465.6 1033.5 459.3 1034.5 459.7 1035.5 422.4 1036.5 453.2 1037.5 457.4 1038.5 453.1 1039.5 460.2 1040.5 468.3 1041.5 443.7 1042.5 446.6 1043.5 452.1 1044.5 453.3 1045.5 450.3 1046.5 451.3 1047.5 457.0 1048.5 455.3 1049.5 453.5 1050.5 447.7 1051.5 457.7 1052.5 457.5 1053.5 420.0 1054.5 444.5 1055.5 465.0 1056.5 458.4 1057.5 457.6 1058.5 445.8 1059.5 450.3 1060.5 449.4 1061.5 458.4 1062.5 455.4 1063.5 473.5 1064.5 455.0 1065.5 447.5 1066.5 476.8 1067.5 450.3 1068.5 444.5 1069.5 463.8 1070.5 391.3 1071.5 437.1 1072.5 442.8 1073.5 464.6 1074.5 432.4 1075.5 469.4 1076.5 465.2 1077.5 459.0 1078.5 407.8 1079.5 452.2 1080.5 462.2 1081.5 442.2 1082.5 459.8 1083.5 454.7 1084.5 459.6 1085.5 435.8 1086.5 449.0 1087.5 446.8 1088.5 449.2 1089.5 454.4 1090.5 441.4 1091.5 445.2 1092.5 445.3 1093.5 458.1 1094.5 452.5 1095.5 456.9 1096.5 459.3 1097.5 461.3 1098.5 454.5 1099.5 451.5 1100.5 434.6 1101.5 454.4 1102.5 447.7 1103.5 408.5 1104.5 451.7 1105.5 456.5 1106.5 417.4 1107.5 455.6 1108.5 460.1 1109.5 441.3 1110.5 450.7 1111.5 466.2 1112.5 455.2 1113.5 464.4 1114.5 461.8 1115.5 449.9 1116.5 449.2 1117.5 441.5 1118.5 468.3 1119.5 471.9 1120.5 455.1 1121.5 445.8 1122.5 460.8 1123.5 462.1 1124.5 449.2 1125.5 453.5 1126.5 454.4 1127.5 453.2 1128.5 456.0 1129.5 452.5 1130.5 450.0 1131.5 434.1 1132.5 451.7 1133.5 468.6 1134.5 447.1 1135.5 438.0 1136.5 413.4 1137.5 445.0 1138.5 449.5 1139.5 443.0 1140.5 459.8 1141.5 455.9 1142.5 451.7 1143.5 454.6 1144.5 464.8 1145.5 454.6 1146.5 454.1 1147.5 447.0 1148.5 457.9 1149.5 454.7 1150.5 463.3 1151.5 448.4 1152.5 451.9 1153.5 455.4 1154.5 441.6 1155.5 433.0 1156.5 458.9 1157.5 447.3 1158.5 441.8 1159.5 458.6 1160.5 447.5 1161.5 445.2 1162.5 455.3 1163.5 448.2 1164.5 449.7 1165.5 455.4 1166.5 453.5 1167.5 455.1 1168.5 460.5 1169.5 459.1 1170.5 450.9 1171.5 457.0 1172.5 456.0 1173.5 456.9 1174.5 457.7 1175.5 465.6 1176.5 432.8 1177.5 453.9 1178.5 455.8 1179.5 452.0 1180.5 448.5 1181.5 444.8 1182.5 450.7 1183.5 448.8 1184.5 454.9 1185.5 456.9 1186.5 451.7 1187.5 458.9 1188.5 449.4 1189.5 453.1 1190.5 458.1 1191.5 458.1 1192.5 459.3 1193.5 446.8 1194.5 447.7 1195.5 438.1 1196.5 448.9 1197.5 449.3 1198.5 453.5 1199.5 457.9 1200.5 449.2 1201.5 450.1 1202.5 449.7 1203.5 448.7 1204.5 455.0 1205.5 452.6 1206.5 462.0 1207.5 445.5 1208.5 464.0 1209.5 459.0 1210.5 460.8 1211.5 452.6 1212.5 456.5 1213.5 452.9 1214.5 456.0 1215.5 454.3 1216.5 456.3 1217.5 459.9 1218.5 454.4 1219.5 455.2 1220.5 453.1 1221.5 452.0 1222.5 453.7 1223.5 459.1 1224.5 454.0 1225.5 463.9 1226.5 460.6 1227.5 448.9 1228.5 447.8 1229.5 454.9 1230.5 448.5 1231.5 452.6 1232.5 452.2 1233.5 451.1 1234.5 456.0 1235.5 444.0 1236.5 449.4 1237.5 455.1 1238.5 450.7 1239.5 451.6 1240.5 453.8 1241.5 461.2 1242.5 452.5 1243.5 451.5 1244.5 445.3 1245.5 453.9 1246.5 458.6 1247.5 453.0 1248.5 446.7 1249.5 452.3 1250.5 449.1 1251.5 452.9 1252.5 456.2 1253.5 453.7 1254.5 444.0 1255.5 445.3 1256.5 454.4 1257.5 449.6 1258.5 455.0 1259.5 452.9 1260.5 460.0 1261.5 457.0 1262.5 454.7 1263.5 451.7 1264.5 455.6 1265.5 450.2 1266.5 451.2 1267.5 454.5 1268.5 452.1 1269.5 463.8 1270.5 451.7 1271.5 451.9 1272.5 447.0 1273.5 457.6 1274.5 451.5 1275.5 450.0 1276.5 451.9 1277.5 452.7 1278.5 444.8 1279.5 457.3 1280.5 454.9 1281.5 454.6 1282.5 453.7 1283.5 463.7 1284.5 456.1 1285.5 460.5 1286.5 456.2 1287.5 452.1 1288.5 450.4 1289.5 459.5 1290.5 445.1 1291.5 447.4 1292.5 452.5 1293.5 457.8 1294.5 456.0 1295.5 453.5 1296.5 453.4 1297.5 461.9 1298.5 452.5 1299.5 453.5 1300.5 454.3 1301.5 455.6 1302.5 457.7 1303.5 456.1 1304.5 451.6 1305.5 452.4 1306.5 453.1 1307.5 454.9 1308.5 452.9 1309.5 451.7 1310.5 455.9 1311.5 451.3 1312.5 451.8 1313.5 446.4 1314.5 449.6 1315.5 458.9 1316.5 453.4 1317.5 456.9 1318.5 451.7 1319.5 450.3 1320.5 451.1 1321.5 460.0 1322.5 444.3 1323.5 454.3 1324.5 448.3 1325.5 456.2 1326.5 449.9 1327.5 454.6 1328.5 454.3 1329.5 447.5 1330.5 454.6 1331.5 459.0" fill="none" stroke="#ffffc0" stroke-width="1"/></svg>
<div class="a" style="left:778px;top:184px;width:2px;height:71px;background:#ffffc0;"></div>
<div class="a" style="left:977px;top:308px;width:2px;height:73px;background:#ffffc0;"></div>
<div class="a" style="left:1337px;top:159px;width:24px;height:3px;background:#a0a0a0;"></div>
<div class="a" style="left:1337px;top:159px;width:2px;height:327px;background:#a0a0a0;"></div>
<div class="a" style="left:1339px;top:162px;width:20px;height:324px;background:#282828;"></div>
<div class="a" style="left:1358px;top:162px;width:1px;height:324px;background:#000;"></div>
<div class="a" style="left:1359px;top:162px;width:2px;height:326px;background:#fff;"></div>
<div class="a" style="left:1339px;top:486px;width:22px;height:2px;background:#fff;"></div>
<div class="a" style="left:1341px;top:182px;width:16px;height:303px;background:#ffffc0;"></div>
<div class="a" style="left:1359px;top:161px;width:3px;height:1px;background:#000;"></div>
<div class="t" style="left:1365px;top:156px;">0.0</div>
<div class="a" style="left:1359px;top:184px;width:3px;height:1px;background:#000;"></div>
<div class="t" style="left:1365px;top:179px;">-10.0</div>
<div class="a" style="left:1359px;top:207px;width:3px;height:1px;background:#000;"></div>
<div class="t" style="left:1365px;top:202px;">-20.0</div>
<div class="a" style="left:1359px;top:230px;width:3px;height:1px;background:#000;"></div>
<div class="t" style="left:1365px;top:225px;">-30.0</div>
<div class="a" style="left:1359px;top:253px;width:3px;height:1px;background:#000;"></div>
<div class="t" style="left:1365px;top:248px;">-40.0</div>
<div class="a" style="left:1359px;top:276px;width:3px;height:1px;background:#000;"></div>
<div class="t" style="left:1365px;top:271px;">-50.0</div>
<div class="a" style="left:1359px;top:299px;width:3px;height:1px;background:#000;"></div>
<div class="t" style="left:1365px;top:294px;">-60.0</div>
<div class="a" style="left:1359px;top:323px;width:3px;height:1px;background:#000;"></div>
<div class="t" style="left:1365px;top:318px;">-70.0</div>
<div class="a" style="left:1359px;top:346px;width:3px;height:1px;background:#000;"></div>
<div class="t" style="left:1365px;top:341px;">-80.0</div>
<div class="a" style="left:1359px;top:369px;width:3px;height:1px;background:#000;"></div>
<div class="t" style="left:1365px;top:364px;">-90.0</div>
<div class="a" style="left:1359px;top:392px;width:3px;height:1px;background:#000;"></div>
<div class="t" style="left:1365px;top:387px;">-100.0</div>
<div class="a" style="left:1359px;top:415px;width:3px;height:1px;background:#000;"></div>
<div class="t" style="left:1365px;top:410px;">-110.0</div>
<div class="a" style="left:1359px;top:438px;width:3px;height:1px;background:#000;"></div>
<div class="t" style="left:1365px;top:433px;">-120.0</div>
<div class="a" style="left:1359px;top:461px;width:3px;height:1px;background:#000;"></div>
<div class="t" style="left:1365px;top:456px;">-130.0</div>
<div class="a" style="left:1359px;top:485px;width:3px;height:1px;background:#000;"></div>
<div class="t" style="left:1365px;top:480px;">-140.0</div>
<div class="t" style="left:-12px;top:324px;width:50px;text-align:center;transform:rotate(-90deg)">dBV rms</div>
<div class="t" style="left:61px;top:488px;">Pwr =-9.20</div>
<div class="t" style="right:111px;top:488px;text-align:right;">Right</div>
<div class="a" style="left:59px;top:502px;width:1272px;height:3px;background:#a0a0a0;"></div>
<div class="a" style="left:59px;top:502px;width:2px;height:344px;background:#a0a0a0;"></div>
<div class="a" style="left:1329px;top:505px;width:2px;height:324px;background:#fff;"></div>
<div class="a" style="left:61px;top:829px;width:1270px;height:2px;background:#fff;"></div>
<div class="a" style="left:61px;top:505px;width:1268px;height:324px;background:#282828;"></div>
<div class="a" style="left:61px;top:527px;width:1268px;height:1px;background:#808080;"></div>
<div class="a" style="left:61px;top:550px;width:1268px;height:1px;background:#808080;"></div>
<div class="a" style="left:61px;top:573px;width:1268px;height:1px;background:#808080;"></div>
<div class="a" style="left:61px;top:596px;width:1268px;height:1px;background:#808080;"></div>
<div class="a" style="left:61px;top:619px;width:1268px;height:1px;background:#808080;"></div>
<div class="a" style="left:61px;top:642px;width:1268px;height:1px;background:#808080;"></div>
<div class="a" style="left:61px;top:666px;width:1268px;height:1px;background:#808080;"></div>
<div class="a" style="left:61px;top:689px;width:1268px;height:1px;background:#808080;"></div>
<div class="a" style="left:61px;top:712px;width:1268px;height:1px;background:#808080;"></div>
<div class="a" style="left:61px;top:735px;width:1268px;height:1px;background:#808080;"></div>
<div class="a" style="left:61px;top:758px;width:1268px;height:1px;background:#808080;"></div>
<div class="a" style="left:61px;top:781px;width:1268px;height:1px;background:#808080;"></div>
<div class="a" style="left:61px;top:804px;width:1268px;height:1px;background:#808080;"></div>
<div class="a" style="left:61px;top:828px;width:1268px;height:1px;background:#808080;"></div>
<div class="a" style="left:70px;top:505px;width:1px;height:324px;background:#808080;"></div>
<div class="a" style="left:143px;top:505px;width:1px;height:324px;background:#808080;"></div>
<div class="a" style="left:195px;top:505px;width:1px;height:324px;background:#808080;"></div>
<div class="a" style="left:236px;top:505px;width:1px;height:324px;background:#808080;"></div>
<div class="a" style="left:269px;top:505px;width:1px;height:324px;background:#808080;"></div>
<div class="a" style="left:296px;top:505px;width:1px;height:324px;background:#808080;"></div>
<div class="a" style="left:321px;top:505px;width:1px;height:324px;background:#808080;"></div>
<div class="a" style="left:342px;top:505px;width:1px;height:324px;background:#808080;"></div>
<div class="a" style="left:361px;top:505px;width:1px;height:324px;background:#808080;"></div>
<div class="a" style="left:486px;top:505px;width:1px;height:324px;background:#808080;"></div>
<div class="a" style="left:560px;top:505px;width:1px;height:324px;background:#808080;"></div>
<div class="a" style="left:612px;top:505px;width:1px;height:324px;background:#808080;"></div>
<div class="a" style="left:652px;top:505px;width:1px;height:324px;background:#808080;"></div>
<div class="a" style="left:685px;top:505px;width:1px;height:324px;background:#808080;"></div>
<div class="a" style="left:713px;top:505px;width:1px;height:324px;background:#808080;"></div>
<div class="a" style="left:737px;top:505px;width:1px;height:324px;background:#808080;"></div>
<div class="a" style="left:759px;top:505px;width:1px;height:324px;background:#808080;"></div>
<div class="a" style="left:778px;top:505px;width:1px;height:324px;background:#808080;"></div>
<div class="a" style="left:903px;top:505px;width:1px;height:324px;background:#808080;"></div>
<div class="a" style="left:976px;top:505px;width:1px;height:324px;background:#808080;"></div>
<div class="a" style="left:1028px;top:505px;width:1px;height:324px;background:#808080;"></div>
<div class="a" style="left:1069px;top:505px;width:1px;height:324px;background:#808080;"></div>
<div class="a" style="left:1102px;top:505px;width:1px;height:324px;background:#808080;"></div>
<div class="a" style="left:1130px;top:505px;width:1px;height:324px;background:#808080;"></div>
<div class="a" style="left:1154px;top:505px;width:1px;height:324px;background:#808080;"></div>
<div class="a" style="left:1175px;top:505px;width:1px;height:324px;background:#808080;"></div>
<div class="a" style="left:1194px;top:505px;width:1px;height:324px;background:#808080;"></div>
<div class="a" style="left:1320px;top:505px;width:1px;height:324px;background:#808080;"></div>
<div class="t" style="right:1385px;top:499px;text-align:right;">0.0</div>
<div class="a" style="left:59px;top:504px;width:2px;height:1px;background:#000;"></div>
<div class="t" style="right:1385px;top:522px;text-align:right;">-10.0</div>
<div class="a" style="left:59px;top:527px;width:2px;height:1px;background:#000;"></div>
<div class="t" style="right:1385px;top:545px;text-align:right;">-20.0</div>
<div class="a" style="left:59px;top:550px;width:2px;height:1px;background:#000;"></div>
<div class="t" style="right:1385px;top:568px;text-align:right;">-30.0</div>
<div class="a" style="left:59px;top:573px;width:2px;height:1px;background:#000;"></div>
<div class="t" style="right:1385px;top:591px;text-align:right;">-40.0</div>
<div class="a" style="left:59px;top:596px;width:2px;height:1px;background:#000;"></div>
<div class="t" style="right:1385px;top:614px;text-align:right;">-50.0</div>
<div class="a" style="left:59px;top:619px;width:2px;height:1px;background:#000;"></div>
<div class="t" style="right:1385px;top:637px;text-align:right;">-60.0</div>
<div class="a" style="left:59px;top:642px;width:2px;height:1px;background:#000;"></div>
<div class="t" style="right:1385px;top:661px;text-align:right;">-70.0</div>
<div class="a" style="left:59px;top:666px;width:2px;height:1px;background:#000;"></div>
<div class="t" style="right:1385px;top:684px;text-align:right;">-80.0</div>
<div class="a" style="left:59px;top:689px;width:2px;height:1px;background:#000;"></div>
<div class="t" style="right:1385px;top:707px;text-align:right;">-90.0</div>
<div class="a" style="left:59px;top:712px;width:2px;height:1px;background:#000;"></div>
<div class="t" style="right:1385px;top:730px;text-align:right;">-100.0</div>
<div class="a" style="left:59px;top:735px;width:2px;height:1px;background:#000;"></div>
<div class="t" style="right:1385px;top:753px;text-align:right;">-110.0</div>
<div class="a" style="left:59px;top:758px;width:2px;height:1px;background:#000;"></div>
<div class="t" style="right:1385px;top:776px;text-align:right;">-120.0</div>
<div class="a" style="left:59px;top:781px;width:2px;height:1px;background:#000;"></div>
<div class="t" style="right:1385px;top:799px;text-align:right;">-130.0</div>
<div class="a" style="left:59px;top:804px;width:2px;height:1px;background:#000;"></div>
<div class="t" style="right:1385px;top:823px;text-align:right;">-140.0</div>
<div class="a" style="left:59px;top:828px;width:2px;height:1px;background:#000;"></div>
<svg class="a" style="left:61px;top:505px;overflow:hidden" width="1268" height="324" viewBox="61 505 1268 324" shape-rendering="crispEdges"><path d="M61.7 763.5 L75.1 804.4 87.6 764.5 99.3 767.0 110.3 760.5 120.6 763.8 130.4 789.9 139.7 754.3 148.5 748.5 156.9 760.4 165.0 778.0 172.7 779.8 180.1 770.0 187.2 766.3 194.0 782.3 200.6 797.0 206.9 783.7 213.1 769.3 219.0 770.1 224.7 764.3 230.3 742.7 235.7 722.3 240.9 727.0 246.0 753.3 251.0 758.1 255.8 753.0 260.5 767.9 265.1 750.9 269.6 747.0 273.9 752.3 278.2 763.4 282.4 774.0 286.4 763.6 290.4 753.5 294.3 743.6 298.1 747.7 301.8 766.9 305.5 786.1 309.1 769.2 312.6 763.8 316.0 761.8 319.4 768.2 322.7 774.3 326.0 766.2 329.2 772.5 332.3 782.7 335.4 792.8 338.5 773.9 341.5 766.1 344.4 760.3 347.3 755.5 350.2 760.9 353.0 774.0 355.7 788.4 358.4 753.7 361.1 720.2 363.8 740.8 366.4 761.1 368.9 771.5 371.5 770.0 374.0 772.2 376.4 784.3 379.3 778.0 381.7 766.7 384.0 805.0 386.4 793.9 388.7 781.7 390.9 775.3 393.2 752.9 395.4 746.9 397.6 755.4 399.8 778.1 401.9 823.7 404.0 794.4 406.1 783.4 408.2 789.9 410.2 782.2 412.3 792.0 414.3 775.5 416.2 772.2 418.2 778.8 420.1 789.5 422.0 790.8 423.9 771.7 425.8 771.2 427.7 770.3 429.5 798.2 431.3 765.4 433.1 752.5 434.9 732.5 436.7 734.7 438.4 759.9 440.1 779.1 441.9 784.5 443.6 782.7 445.2 796.4 446.9 794.9 448.6 764.4 450.2 817.9 451.8 766.3 453.4 812.4 455.0 782.3 456.6 777.4 458.2 794.8 459.7 789.9 461.3 779.2 462.8 778.7 464.3 797.5 465.8 758.6 467.3 743.9 468.8 749.4 470.2 770.5 471.7 776.7 473.1 785.8 474.6 784.0 476.0 777.2 477.4 773.2 478.8 785.4 480.2 779.6 481.6 782.2 482.9 773.6 484.3 792.2 485.6 774.6 487.0 757.2 488.3 756.8 489.6 772.7 490.9 787.1 492.2 779.4 493.5 792.1 494.8 774.9 496.0 777.2 497.3 804.2 498.6 781.0 499.8 785.2 501.0 777.8 502.3 797.5 503.5 770.0 504.7 773.6 505.5 794.8 507.5 780.7 508.5 777.5 509.5 778.2 510.5 788.4 511.5 784.9 512.5 797.5 514.5 771.8 515.5 781.7 516.5 781.4 517.5 787.9 518.5 778.6 519.5 752.4 520.5 745.7 521.5 759.7 523.5 787.4 524.5 771.4 525.5 778.9 526.5 770.2 527.5 745.1 528.5 741.4 529.5 760.2 530.5 781.6 531.5 783.4 532.5 793.6 533.5 791.4 534.5 793.1 535.5 788.1 536.5 785.2 537.5 768.4 538.5 775.8 539.5 784.3 540.5 775.3 541.5 794.0 542.5 784.9 543.5 778.2 544.5 783.9 545.5 785.1 546.5 795.4 547.5 798.7 548.5 798.2 549.5 780.3 550.5 779.4 551.5 783.2 552.5 783.4 553.5 780.6 554.5 783.3 555.5 776.6 556.5 787.9 557.5 783.7 558.5 779.5 559.5 778.8 560.5 754.5 561.5 748.3 562.5 763.4 563.5 779.8 564.5 783.2 565.5 777.3 566.5 780.4 567.5 795.8 568.5 786.6 569.5 788.3 570.5 802.0 571.5 774.2 572.5 788.7 573.5 786.3 574.5 795.2 575.5 779.1 576.5 779.2 577.5 780.4 578.5 792.9 579.5 781.5 580.5 779.3 581.5 789.8 582.5 794.5 583.5 794.8 584.5 786.9 585.5 788.6 586.5 780.3 587.5 786.7 588.5 749.7 589.5 760.7 590.5 780.2 591.5 782.3 592.5 792.2 593.5 803.0 594.5 783.2 595.5 779.3 596.5 787.9 597.5 794.5 598.5 777.4 599.5 790.1 600.5 783.2 601.5 792.0 602.5 788.4 603.5 789.5 604.5 775.7 605.5 783.7 606.5 788.3 607.5 790.1 608.5 781.3 609.5 784.8 610.5 785.2 611.5 794.6 612.5 781.1 613.5 789.7 614.5 782.3 615.5 799.3 616.5 787.7 617.5 794.8 618.5 791.5 619.5 789.7 620.5 761.5 621.5 751.0 622.5 760.4 623.5 776.5 624.5 783.6 625.5 789.0 626.5 788.4 627.5 782.8 628.5 789.2 629.5 781.9 630.5 785.4 631.5 791.9 632.5 781.6 633.5 759.0 634.5 744.4 635.5 779.3 636.5 788.3 637.5 794.1 638.5 792.5 639.5 791.1 640.5 786.5 641.5 791.9 642.5 792.6 643.5 793.5 644.5 782.9 645.5 762.2 646.5 758.6 647.5 793.9 648.5 792.4 649.5 784.2 650.5 797.7 651.5 785.3 652.5 781.6 653.5 782.5 654.5 782.9 655.5 790.5 656.5 783.1 657.5 786.6 658.5 788.8 659.5 791.4 660.5 789.0 661.5 795.3 662.5 781.0 663.5 783.0 664.5 789.6 665.5 791.0 666.5 791.3 667.5 786.7 668.5 789.4 669.5 786.3 670.5 740.3 671.5 764.6 672.5 778.8 673.5 777.9 674.5 793.8 675.5 795.2 676.5 800.1 677.5 803.0 678.5 787.6 679.5 798.6 680.5 780.4 681.5 782.7 682.5 777.5 683.5 799.1 684.5 780.1 685.5 790.8 686.5 786.9 687.5 794.5 688.5 784.5 689.5 792.8 690.5 789.7 691.5 788.1 692.5 807.6 693.5 796.7 694.5 789.1 695.5 798.1 696.5 780.4 697.5 783.9 698.5 794.0 699.5 801.6 700.5 749.8 701.5 745.0 702.5 810.5 703.5 782.3 704.5 802.7 705.5 796.2 706.5 785.5 707.5 792.7 708.5 789.4 709.5 790.9 710.5 789.8 711.5 786.1 712.5 786.2 713.5 797.3 714.5 788.8 715.5 794.6 716.5 791.2 717.5 796.6 718.5 791.4 719.5 782.5 720.5 816.0 721.5 764.7 722.5 798.1 723.5 802.1 724.5 797.5 725.5 792.0 726.5 754.7 727.5 740.8 728.5 795.1 729.5 790.3 730.5 790.0 731.5 784.5 732.5 798.5 733.5 780.5 734.5 804.6 735.5 794.4 736.5 789.7 737.5 805.1 738.5 786.8 739.5 768.7 740.5 803.3 741.5 787.4 742.5 791.2 743.5 792.4 744.5 812.7 745.5 787.8 746.5 795.5 747.5 802.4 748.5 789.7 749.5 742.8 750.5 769.5 751.5 791.6 752.5 786.1 753.5 788.1 754.5 783.9 755.5 785.4 756.5 782.8 757.5 794.3 758.5 794.1 759.5 783.4 760.5 792.5 761.5 786.7 762.5 781.4 763.5 789.4 764.5 790.0 765.5 782.1 766.5 782.5 767.5 781.7 768.5 775.7 769.5 748.3 770.5 768.1 771.5 752.9 772.5 756.1 773.5 747.4 774.5 736.5 775.5 726.0 776.5 707.2 777.5 677.8 778.5 530.8 779.5 549.7 780.5 681.4 781.5 711.0 782.5 728.7 783.5 738.8 784.5 751.2 785.5 759.0 786.5 764.3 787.5 751.0 788.5 766.5 789.5 770.4 790.5 783.0 791.5 777.1 792.5 786.3 793.5 789.3 794.5 792.6 795.5 784.1 796.5 781.1 797.5 787.8 798.5 790.1 799.5 801.1 800.5 795.3 801.5 796.9 802.5 786.0 803.5 757.0 804.5 744.8 805.5 790.3 806.5 804.7 807.5 800.2 808.5 795.3 809.5 802.0 810.5 796.1 811.5 787.4 812.5 785.0 813.5 795.9 814.5 802.5 815.5 801.3 816.5 794.8 817.5 793.8 818.5 793.3 819.5 752.6 820.5 796.9 821.5 792.9 822.5 785.4 823.5 798.5 824.5 792.8 825.5 743.5 826.5 791.1 827.5 804.4 828.5 800.6 829.5 811.2 830.5 756.1 831.5 799.0 832.5 792.1 833.5 773.5 834.5 802.7 835.5 796.4 836.5 750.0 837.5 799.8 838.5 806.6 839.5 800.9 840.5 792.1 841.5 807.6 842.5 802.0 843.5 799.7 844.5 796.9 845.5 761.7 846.5 754.3 847.5 805.2 848.5 801.6 849.5 797.2 850.5 801.8 851.5 778.7 852.5 799.2 853.5 795.4 854.5 797.6 855.5 797.8 856.5 792.4 857.5 802.0 858.5 755.2 859.5 797.4 860.5 793.3 861.5 802.9 862.5 811.3 863.5 798.2 864.5 801.4 865.5 803.6 866.5 805.2 867.5 808.8 868.5 807.5 869.5 780.0 870.5 806.3 871.5 803.5 872.5 799.7 873.5 808.6 874.5 809.2 875.5 797.5 876.5 804.4 877.5 800.0 878.5 797.6 879.5 786.9 880.5 768.3 881.5 798.3 882.5 795.1 883.5 808.6 884.5 801.4 885.5 807.2 886.5 803.5 887.5 782.0 888.5 792.9 889.5 795.0 890.5 761.7 891.5 805.8 892.5 791.4 893.5 809.3 894.5 794.9 895.5 789.4 896.5 804.5 897.5 813.1 898.5 797.2 899.5 769.6 900.5 793.9 901.5 809.3 902.5 800.9 903.5 764.2 904.5 617.4 905.5 777.7 906.5 809.0 907.5 805.0 908.5 803.8 909.5 812.6 910.5 823.4 911.5 804.8 912.5 784.2 913.5 797.4 914.5 802.7 915.5 805.8 916.5 805.9 917.5 780.2 918.5 790.8 919.5 798.1 920.5 803.7 921.5 791.7 922.5 805.3 923.5 796.1 924.5 798.6 925.5 806.4 926.5 814.7 927.5 814.3 928.5 805.2 929.5 800.4 930.5 784.6 931.5 768.3 932.5 817.2 933.5 770.7 934.5 807.0 935.5 794.6 936.5 790.9 937.5 804.8 938.5 801.1 939.5 809.4 940.5 797.6 941.5 792.1 942.5 805.4 943.5 791.0 944.5 790.6 945.5 807.5 946.5 805.7 947.5 802.3 948.5 774.2 949.5 806.1 950.5 791.2 951.5 799.2 952.5 815.9 953.5 798.1 954.5 800.3 955.5 774.1 956.5 809.4 957.5 796.1 958.5 805.0 959.5 819.9 960.5 807.0 961.5 798.1 962.5 795.9 963.5 797.8 964.5 799.0 965.5 808.7 966.5 803.5 967.5 797.2 968.5 804.2 969.5 802.7 970.5 800.4 971.5 815.7 972.5 746.9 973.5 805.1 974.5 812.4 975.5 801.5 976.5 793.9 977.5 654.4 978.5 793.3 979.5 813.2 980.5 814.3 981.5 802.8 982.5 809.4 983.5 798.4 984.5 797.0 985.5 808.7 986.5 803.6 987.5 813.0 988.5 786.6 989.5 790.0 990.5 803.9 991.5 802.6 992.5 805.7 993.5 796.2 994.5 798.7 995.5 781.4 996.5 789.6 997.5 804.2 998.5 820.4 999.5 770.8 1000.5 810.1 1001.5 798.0 1002.5 806.1 1003.5 755.9 1004.5 792.5 1005.5 801.6 1006.5 815.7 1007.5 801.4 1008.5 800.3 1009.5 803.9 1010.5 793.3 1011.5 805.8 1012.5 800.6 1013.5 799.4 1014.5 796.2 1015.5 806.9 1016.5 798.3 1017.5 803.2 1018.5 805.1 1019.5 806.1 1020.5 811.4 1021.5 798.7 1022.5 803.7 1023.5 799.7 1024.5 802.9 1025.5 799.9 1026.5 804.2 1027.5 808.4 1028.5 801.3 1029.5 718.5 1030.5 802.7 1031.5 795.3 1032.5 794.1 1033.5 803.6 1034.5 794.8 1035.5 797.3 1036.5 817.5 1037.5 798.5 1038.5 812.8 1039.5 806.7 1040.5 801.5 1041.5 793.3 1042.5 795.5 1043.5 791.1 1044.5 791.8 1045.5 803.3 1046.5 803.3 1047.5 811.4 1048.5 805.6 1049.5 811.7 1050.5 799.8 1051.5 809.8 1052.5 796.6 1053.5 795.1 1054.5 805.3 1055.5 792.1 1056.5 798.8 1057.5 803.3 1058.5 805.6 1059.5 810.8 1060.5 810.1 1061.5 799.9 1062.5 797.8 1063.5 797.7 1064.5 803.7 1065.5 793.9 1066.5 802.8 1067.5 816.3 1068.5 789.1 1069.5 802.7 1070.5 748.8 1071.5 822.4 1072.5 799.1 1073.5 804.3 1074.5 808.8 1075.5 807.5 1076.5 809.1 1077.5 797.4 1078.5 794.8 1079.5 799.3 1080.5 793.4 1081.5 803.5 1082.5 792.0 1083.5 801.6 1084.5 797.9 1085.5 800.7 1086.5 790.1 1087.5 812.7 1088.5 798.0 1089.5 797.5 1090.5 792.6 1091.5 798.1 1092.5 798.6 1093.5 796.6 1094.5 804.1 1095.5 798.9 1096.5 793.6 1097.5 809.2 1098.5 792.4 1099.5 797.3 1100.5 799.1 1101.5 811.3 1102.5 802.4 1103.5 766.7 1104.5 799.2 1105.5 796.3 1106.5 802.9 1107.5 779.1 1108.5 801.4 1109.5 795.3 1110.5 802.4 1111.5 799.2 1112.5 771.8 1113.5 801.1 1114.5 793.0 1115.5 800.0 1116.5 800.1 1117.5 803.9 1118.5 799.3 1119.5 808.9 1120.5 782.7 1121.5 793.1 1122.5 806.3 1123.5 794.8 1124.5 799.9 1125.5 805.2 1126.5 816.0 1127.5 796.7 1128.5 803.5 1129.5 794.7 1130.5 796.6 1131.5 786.2 1132.5 807.3 1133.5 807.1 1134.5 794.4 1135.5 794.7 1136.5 791.3 1137.5 794.3 1138.5 794.5 1139.5 799.7 1140.5 810.5 1141.5 802.0 1142.5 799.0 1143.5 796.3 1144.5 796.8 1145.5 788.4 1146.5 813.9 1147.5 799.3 1148.5 800.6 1149.5 807.4 1150.5 806.1 1151.5 801.8 1152.5 800.1 1153.5 803.6 1154.5 809.6 1155.5 802.1 1156.5 794.1 1157.5 792.7 1158.5 800.3 1159.5 805.9 1160.5 801.3 1161.5 793.3 1162.5 800.4 1163.5 803.4 1164.5 792.2 1165.5 806.1 1166.5 796.0 1167.5 800.0 1168.5 799.1 1169.5 797.1 1170.5 803.5 1171.5 798.1 1172.5 794.0 1173.5 796.4 1174.5 788.8 1175.5 798.7 1176.5 802.4 1177.5 800.8 1178.5 799.4 1179.5 814.3 1180.5 795.7 1181.5 801.4 1182.5 804.7 1183.5 791.8 1184.5 798.8 1185.5 802.8 1186.5 806.7 1187.5 805.2 1188.5 802.9 1189.5 800.2 1190.5 803.0 1191.5 798.2 1192.5 800.6 1193.5 797.0 1194.5 800.0 1195.5 784.1 1196.5 798.5 1197.5 799.7 1198.5 801.1 1199.5 802.5 1200.5 796.3 1201.5 793.3 1202.5 799.1 1203.5 804.9 1204.5 804.3 1205.5 801.4 1206.5 796.4 1207.5 799.4 1208.5 800.3 1209.5 806.4 1210.5 797.1 1211.5 807.1 1212.5 798.8 1213.5 804.4 1214.5 794.4 1215.5 804.9 1216.5 798.1 1217.5 799.0 1218.5 799.6 1219.5 799.6 1220.5 799.7 1221.5 798.3 1222.5 803.5 1223.5 807.9 1224.5 801.9 1225.5 795.6 1226.5 793.8 1227.5 798.5 1228.5 793.2 1229.5 798.8 1230.5 799.0 1231.5 800.8 1232.5 797.6 1233.5 798.0 1234.5 795.9 1235.5 793.5 1236.5 801.2 1237.5 812.7 1238.5 794.0 1239.5 793.9 1240.5 797.4 1241.5 803.3 1242.5 800.7 1243.5 803.2 1244.5 801.8 1245.5 802.3 1246.5 793.1 1247.5 802.9 1248.5 800.5 1249.5 793.0 1250.5 805.4 1251.5 799.8 1252.5 795.2 1253.5 804.8 1254.5 799.2 1255.5 804.0 1256.5 798.6 1257.5 794.8 1258.5 795.6 1259.5 802.6 1260.5 802.7 1261.5 794.6 1262.5 795.3 1263.5 803.3 1264.5 803.4 1265.5 805.0 1266.5 801.2 1267.5 807.6 1268.5 799.0 1269.5 796.0 1270.5 791.5 1271.5 797.9 1272.5 794.9 1273.5 802.9 1274.5 791.8 1275.5 797.4 1276.5 804.2 1277.5 788.3 1278.5 800.5 1279.5 798.5 1280.5 806.5 1281.5 791.2 1282.5 804.0 1283.5 797.8 1284.5 804.5 1285.5 796.8 1286.5 802.1 1287.5 789.5 1288.5 796.1 1289.5 796.6 1290.5 806.9 1291.5 794.8 1292.5 795.8 1293.5 800.1 1294.5 802.9 1295.5 795.7 1296.5 796.6 1297.5 796.7 1298.5 791.8 1299.5 801.5 1300.5 803.0 1301.5 796.3 1302.5 794.4 1303.5 797.5 1304.5 793.7 1305.5 795.7 1306.5 801.1 1307.5 804.1 1308.5 801.3 1309.5 800.4 1310.5 802.6 1311.5 791.4 1312.5 798.6 1313.5 792.7 1314.5 797.4 1315.5 797.1 1316.5 800.4 1317.5 799.0 1318.5 801.4 1319.5 799.4 1320.5 796.3 1321.5 808.2 1322.5 792.1 1323.5 797.8 1324.5 799.8 1325.5 796.4 1326.5 798.4 1327.5 797.7 1328.5 801.8 1329.5 797.9 1330.5 800.2 1331.5 804.1" fill="none" stroke="#ffffc0" stroke-width="1"/></svg>
<div class="a" style="left:778px;top:527px;width:2px;height:71px;background:#ffffc0;"></div>
<div class="a" style="left:977px;top:654px;width:2px;height:70px;background:#ffffc0;"></div>
<div class="a" style="left:1337px;top:502px;width:24px;height:3px;background:#a0a0a0;"></div>
<div class="a" style="left:1337px;top:502px;width:2px;height:344px;background:#a0a0a0;"></div>
<div class="a" style="left:1339px;top:505px;width:20px;height:324px;background:#282828;"></div>
<div class="a" style="left:1358px;top:505px;width:1px;height:324px;background:#000;"></div>
<div class="a" style="left:1359px;top:505px;width:2px;height:343px;background:#fff;"></div>
<div class="a" style="left:1339px;top:829px;width:22px;height:2px;background:#fff;"></div>
<div class="a" style="left:1341px;top:525px;width:16px;height:303px;background:#ffffc0;"></div>
<div class="a" style="left:1359px;top:504px;width:3px;height:1px;background:#000;"></div>
<div class="t" style="left:1365px;top:499px;">0.0</div>
<div class="a" style="left:1359px;top:527px;width:3px;height:1px;background:#000;"></div>
<div class="t" style="left:1365px;top:522px;">-10.0</div>
<div class="a" style="left:1359px;top:550px;width:3px;height:1px;background:#000;"></div>
<div class="t" style="left:1365px;top:545px;">-20.0</div>
<div class="a" style="left:1359px;top:573px;width:3px;height:1px;background:#000;"></div>
<div class="t" style="left:1365px;top:568px;">-30.0</div>
<div class="a" style="left:1359px;top:596px;width:3px;height:1px;background:#000;"></div>
<div class="t" style="left:1365px;top:591px;">-40.0</div>
<div class="a" style="left:1359px;top:619px;width:3px;height:1px;background:#000;"></div>
<div class="t" style="left:1365px;top:614px;">-50.0</div>
<div class="a" style="left:1359px;top:642px;width:3px;height:1px;background:#000;"></div>
<div class="t" style="left:1365px;top:637px;">-60.0</div>
<div class="a" style="left:1359px;top:666px;width:3px;height:1px;background:#000;"></div>
<div class="t" style="left:1365px;top:661px;">-70.0</div>
<div class="a" style="left:1359px;top:689px;width:3px;height:1px;background:#000;"></div>
<div class="t" style="left:1365px;top:684px;">-80.0</div>
<div class="a" style="left:1359px;top:712px;width:3px;height:1px;background:#000;"></div>
<div class="t" style="left:1365px;top:707px;">-90.0</div>
<div class="a" style="left:1359px;top:735px;width:3px;height:1px;background:#000;"></div>
<div class="t" style="left:1365px;top:730px;">-100.0</div>
<div class="a" style="left:1359px;top:758px;width:3px;height:1px;background:#000;"></div>
<div class="t" style="left:1365px;top:753px;">-110.0</div>
<div class="a" style="left:1359px;top:781px;width:3px;height:1px;background:#000;"></div>
<div class="t" style="left:1365px;top:776px;">-120.0</div>
<div class="a" style="left:1359px;top:804px;width:3px;height:1px;background:#000;"></div>
<div class="t" style="left:1365px;top:799px;">-130.0</div>
<div class="a" style="left:1359px;top:828px;width:3px;height:1px;background:#000;"></div>
<div class="t" style="left:1365px;top:823px;">-140.0</div>
<div class="t" style="left:-12px;top:667px;width:50px;text-align:center;transform:rotate(-90deg)">dBV rms</div>
<div class="a" style="left:61px;top:828px;width:1268px;height:16px;background:repeating-conic-gradient(#fff 0 25%,#f0f0f0 0 50%) 0 0/2px 2px;"></div>
<div class="a" style="left:61px;top:828px;width:17px;height:16px;background:#f0f0f0;border:1px solid;border-color:#f0f0f0 #696969 #696969 #f0f0f0;box-shadow:inset 1px 1px 0 #fff,inset -1px -1px 0 #a0a0a0"><svg class="a" style="left:5px;top:3px" width="5" height="9"><path d="M5 0v9L0 4.5z" fill="#000"/></svg></div>
<div class="a" style="left:79px;top:828px;width:17px;height:16px;background:#f0f0f0;border:1px solid;border-color:#f0f0f0 #696969 #696969 #f0f0f0;box-shadow:inset 1px 1px 0 #fff,inset -1px -1px 0 #a0a0a0"></div>
<div class="a" style="left:1311px;top:828px;width:17px;height:16px;background:#f0f0f0;border:1px solid;border-color:#f0f0f0 #696969 #696969 #f0f0f0;box-shadow:inset 1px 1px 0 #fff,inset -1px -1px 0 #a0a0a0"><svg class="a" style="left:6px;top:3px" width="5" height="9"><path d="M0 0v9L5 4.5z" fill="#000"/></svg></div>
<div class="a" style="left:61px;top:844px;width:1270px;height:2px;background:#fff;"></div>
<div class="a" style="left:1339px;top:829px;width:20px;height:15px;background:#f0f0f0;"></div>
<div class="a" style="left:1359px;top:829px;width:2px;height:17px;background:#fff;"></div>
<div class="a" style="left:1339px;top:844px;width:22px;height:2px;background:#fff;"></div>
<div class="t" style="left:-30px;width:200px;top:849px;text-align:center;">20</div>
<div class="t" style="left:43px;width:200px;top:849px;text-align:center;">30</div>
<div class="t" style="left:95px;width:200px;top:849px;text-align:center;">40</div>
<div class="t" style="left:136px;width:200px;top:849px;text-align:center;">50</div>
<div class="t" style="left:169px;width:200px;top:849px;text-align:center;">60</div>
<div class="t" style="left:221px;width:200px;top:849px;text-align:center;">80</div>
<div class="t" style="left:261px;width:200px;top:849px;text-align:center;">100</div>
<div class="t" style="left:386px;width:200px;top:849px;text-align:center;">200</div>
<div class="t" style="left:460px;width:200px;top:849px;text-align:center;">300</div>
<div class="t" style="left:512px;width:200px;top:849px;text-align:center;">400</div>
<div class="t" style="left:552px;width:200px;top:849px;text-align:center;">500</div>
<div class="t" style="left:585px;width:200px;top:849px;text-align:center;">600</div>
<div class="t" style="left:637px;width:200px;top:849px;text-align:center;">800</div>
<div class="t" style="left:678px;width:200px;top:849px;text-align:center;">1.0k</div>
<div class="t" style="left:803px;width:200px;top:849px;text-align:center;">2.0k</div>
<div class="t" style="left:876px;width:200px;top:849px;text-align:center;">3.0k</div>
<div class="t" style="left:928px;width:200px;top:849px;text-align:center;">4.0k</div>
<div class="t" style="left:969px;width:200px;top:849px;text-align:center;">5.0k</div>
<div class="t" style="left:1002px;width:200px;top:849px;text-align:center;">6.0k</div>
<div class="t" style="left:1054px;width:200px;top:849px;text-align:center;">8.0k</div>
<div class="t" style="left:1094px;width:200px;top:849px;text-align:center;">10.0k</div>
<div class="t" style="left:1220px;width:200px;top:849px;text-align:center;">20.0k</div>
<div class="a" style="left:70px;top:845px;width:1px;height:2px;background:#000;"></div>
<div class="a" style="left:143px;top:845px;width:1px;height:2px;background:#000;"></div>
<div class="a" style="left:195px;top:845px;width:1px;height:2px;background:#000;"></div>
<div class="a" style="left:236px;top:845px;width:1px;height:2px;background:#000;"></div>
<div class="a" style="left:269px;top:845px;width:1px;height:2px;background:#000;"></div>
<div class="a" style="left:296px;top:845px;width:1px;height:2px;background:#000;"></div>
<div class="a" style="left:321px;top:845px;width:1px;height:2px;background:#000;"></div>
<div class="a" style="left:342px;top:845px;width:1px;height:2px;background:#000;"></div>
<div class="a" style="left:361px;top:845px;width:1px;height:2px;background:#000;"></div>
<div class="a" style="left:486px;top:845px;width:1px;height:2px;background:#000;"></div>
<div class="a" style="left:560px;top:845px;width:1px;height:2px;background:#000;"></div>
<div class="a" style="left:612px;top:845px;width:1px;height:2px;background:#000;"></div>
<div class="a" style="left:652px;top:845px;width:1px;height:2px;background:#000;"></div>
<div class="a" style="left:685px;top:845px;width:1px;height:2px;background:#000;"></div>
<div class="a" style="left:713px;top:845px;width:1px;height:2px;background:#000;"></div>
<div class="a" style="left:737px;top:845px;width:1px;height:2px;background:#000;"></div>
<div class="a" style="left:759px;top:845px;width:1px;height:2px;background:#000;"></div>
<div class="a" style="left:778px;top:845px;width:1px;height:2px;background:#000;"></div>
<div class="a" style="left:903px;top:845px;width:1px;height:2px;background:#000;"></div>
<div class="a" style="left:976px;top:845px;width:1px;height:2px;background:#000;"></div>
<div class="a" style="left:1028px;top:845px;width:1px;height:2px;background:#000;"></div>
<div class="a" style="left:1069px;top:845px;width:1px;height:2px;background:#000;"></div>
<div class="a" style="left:1102px;top:845px;width:1px;height:2px;background:#000;"></div>
<div class="a" style="left:1130px;top:845px;width:1px;height:2px;background:#000;"></div>
<div class="a" style="left:1154px;top:845px;width:1px;height:2px;background:#000;"></div>
<div class="a" style="left:1175px;top:845px;width:1px;height:2px;background:#000;"></div>
<div class="a" style="left:1194px;top:845px;width:1px;height:2px;background:#000;"></div>
<div class="a" style="left:1320px;top:845px;width:1px;height:2px;background:#000;"></div>
<div class="t" style="left:1339px;top:849px;">Pwr</div>
<div class="t" style="left:620px;width:200px;top:861px;text-align:center;">Frequency (Hz)</div>
<div class="a" style="left:1345px;top:862px;width:10px;height:10px;background:#f0f0f0;border:1px solid;border-color:#fff #696969 #696969 #fff;font-size:11px;line-height:8px;text-align:center;font-weight:bold">-</div>
<div class="a" style="left:1427px;top:862px;width:10px;height:10px;background:#f0f0f0;border:1px solid;border-color:#fff #696969 #696969 #fff;font-size:11px;line-height:8px;text-align:center;font-weight:bold">+</div>
<div class="a" style="left:0px;top:142px;width:1px;height:732px;background:#6d6d6d;"></div>
<div class="a" style="left:1439px;top:45px;width:1px;height:829px;background:#a0a0a0;"></div>
<div class="a" style="left:1439px;top:79px;width:1px;height:32px;background:#000;"></div>
<div class="a" style="left:0px;top:874px;width:1440px;height:1px;background:#696969;"></div>
<div class="a" style="left:0px;top:875px;width:1440px;height:1px;background:#fff;"></div>
<div class="a" style="left:4px;top:878px;width:118px;height:18px;border:1px solid;border-color:#a0a0a0 #fff #fff #a0a0a0"><div class="t" style="left:3px;top:2px">Running...</div></div>
<div class="a" style="left:124px;top:878px;width:101px;height:18px;border:1px solid;border-color:#a0a0a0 #fff #fff #a0a0a0"><div class="t" style="left:3px;top:2px">Real Time</div></div>
<div class="a" style="left:227px;top:878px;width:70px;height:18px;border:1px solid;border-color:#a0a0a0 #fff #fff #a0a0a0"><div class="t" style="left:3px;top:2px">96000 Hz</div></div>
<div class="a" style="left:300px;top:878px;width:51px;height:18px;border:1px solid;border-color:#a0a0a0 #fff #fff #a0a0a0"><div class="t" style="left:3px;top:2px">24 Bit</div></div>
<div class="a" style="left:353px;top:878px;width:61px;height:18px;border:1px solid;border-color:#a0a0a0 #fff #fff #a0a0a0"><div class="t" style="left:3px;top:2px">Stereo</div></div>
<div class="a" style="left:416px;top:878px;width:101px;height:18px;border:1px solid;border-color:#a0a0a0 #fff #fff #a0a0a0"><div class="t" style="left:3px;top:2px">FFT 65536 pts</div></div>
<div class="a" style="left:520px;top:878px;width:73px;height:18px;border:1px solid;border-color:#a0a0a0 #fff #fff #a0a0a0"><div class="t" style="left:3px;top:2px">Blackman</div></div>
<div class="a" style="left:595px;top:878px;width:842px;height:18px;border:1px solid;border-color:#a0a0a0 #fff #fff #a0a0a0"><div class="t" style="left:3px;top:2px"></div></div>
<div class="a" style="left:0px;top:896px;width:1440px;height:2px;background:#fff;"></div>
<div class="a" style="left:0px;top:898px;width:1440px;height:2px;background:#7d6652;"></div>
<div class="a" style="left:114px;top:898px;width:53px;height:2px;background:#a89888;"></div>
<div class="a" style="left:168px;top:898px;width:4px;height:2px;background:#a89888;"></div>
<div class="a" style="left:238px;top:898px;width:58px;height:2px;background:#f4f4f4;"></div>
<div class="a" style="left:872px;top:2px;width:151px;height:128px;background:linear-gradient(#c2d4e9 0,#d3e1f0 26px,#d8e5f3 100%);border:1px solid #59636e;border-radius:5px 5px 0 0;box-shadow:inset 1px 1px 0 rgba(255,255,255,0.6)"></div>
<div class="a" style="left:876px;top:30px;width:143px;height:97px;background:#f0f0f0"></div>
<svg class="a" style="left:878px;top:9px" width="16" height="16" viewBox="0 0 16 16" shape-rendering="crispEdges"><rect x="0.5" y="0.5" width="15" height="15" fill="#fff" stroke="#000"/><path d="M2.5 10.5L6.5 5.5L7 10.5L11 5.5L11.5 10.5L14.5 6.5" stroke="#303030" fill="none" shape-rendering="auto" stroke-width="0.8"/></svg>
<div class="t" style="left:901px;top:10px;font-size:16.5px;line-height:16px;font-weight:bold;letter-spacing:-0.4px">Peak Fre...</div>
<div class="a" style="left:984px;top:9px;width:33px;height:18px;background:linear-gradient(#dce6f2,#c5d5e8);border:1px solid #8797ab;border-radius:3px"></div>
<svg class="a" style="left:993px;top:12px" width="15" height="12" viewBox="0 0 15 12"><path d="M3 2l9 8M12 2L3 10" stroke="#556070" stroke-width="4" stroke-linecap="round"/><path d="M3 2l9 8M12 2L3 10" stroke="#fff" stroke-width="2.4" stroke-linecap="round"/></svg>
<div class="t" style="left:882px;top:31px;font-size:41px;line-height:46px;-webkit-text-stroke:0.6px #000;transform:scaleX(0.6381);transform-origin:0 0">1000.49 Hz</div>
<div class="t" style="left:882px;top:75px;font-size:41px;line-height:46px;-webkit-text-stroke:0.6px #000;transform:scaleX(0.6381);transform-origin:0 0">1000.49 Hz</div>
<div class="a" style="left:1023px;top:2px;width:152px;height:128px;background:linear-gradient(#c2d4e9 0,#d3e1f0 26px,#d8e5f3 100%);border:1px solid #59636e;border-radius:5px 5px 0 0;box-shadow:inset 1px 1px 0 rgba(255,255,255,0.6)"></div>
<div class="a" style="left:1027px;top:30px;width:144px;height:97px;background:#f0f0f0"></div>
<svg class="a" style="left:1029px;top:9px" width="16" height="16" viewBox="0 0 16 16" shape-rendering="crispEdges"><rect x="0.5" y="0.5" width="15" height="15" fill="#fff" stroke="#000"/><path d="M2.5 10.5L6.5 5.5L7 10.5L11 5.5L11.5 10.5L14.5 6.5" stroke="#303030" fill="none" shape-rendering="auto" stroke-width="0.8"/></svg>
<div class="t" style="left:1052px;top:10px;font-size:16.5px;line-height:16px;font-weight:bold;letter-spacing:-0.4px">Peak Am...</div>
<div class="a" style="left:1136px;top:9px;width:33px;height:18px;background:linear-gradient(#dce6f2,#c5d5e8);border:1px solid #8797ab;border-radius:3px"></div>
<svg class="a" style="left:1145px;top:12px" width="15" height="12" viewBox="0 0 15 12"><path d="M3 2l9 8M12 2L3 10" stroke="#556070" stroke-width="4" stroke-linecap="round"/><path d="M3 2l9 8M12 2L3 10" stroke="#fff" stroke-width="2.4" stroke-linecap="round"/></svg>
<div class="t" style="left:1036px;top:31px;font-size:41px;line-height:46px;-webkit-text-stroke:0.6px #000;transform:scaleX(0.4733);transform-origin:0 0">-9.90 dBV rms</div>
<div class="t" style="left:1036px;top:75px;font-size:41px;line-height:46px;-webkit-text-stroke:0.6px #000;transform:scaleX(0.4733);transform-origin:0 0">-9.68 dBV rms</div>
<div class="a" style="left:1176px;top:2px;width:152px;height:128px;background:linear-gradient(#c2d4e9 0,#d3e1f0 26px,#d8e5f3 100%);border:1px solid #59636e;border-radius:5px 5px 0 0;box-shadow:inset 1px 1px 0 rgba(255,255,255,0.6)"></div>
<div class="a" style="left:1180px;top:30px;width:144px;height:97px;background:#f0f0f0"></div>
<svg class="a" style="left:1182px;top:9px" width="16" height="16" viewBox="0 0 16 16" shape-rendering="crispEdges"><rect x="0.5" y="0.5" width="15" height="15" fill="#fff" stroke="#000"/><path d="M2.5 10.5L6.5 5.5L7 10.5L11 5.5L11.5 10.5L14.5 6.5" stroke="#303030" fill="none" shape-rendering="auto" stroke-width="0.8"/></svg>
<div class="t" style="left:1184px;width:120px;text-align:center;top:10px;font-size:16.5px;line-height:16px;font-weight:bold;letter-spacing:-0.4px">THD</div>
<div class="a" style="left:1289px;top:9px;width:33px;height:18px;background:linear-gradient(#dce6f2,#c5d5e8);border:1px solid #8797ab;border-radius:3px"></div>
<svg class="a" style="left:1298px;top:12px" width="15" height="12" viewBox="0 0 15 12"><path d="M3 2l9 8M12 2L3 10" stroke="#556070" stroke-width="4" stroke-linecap="round"/><path d="M3 2l9 8M12 2L3 10" stroke="#fff" stroke-width="2.4" stroke-linecap="round"/></svg>
<div class="t" style="left:1186px;top:31px;font-size:41px;line-height:46px;-webkit-text-stroke:0.6px #000;transform:scaleX(0.6786);transform-origin:0 0">1.51709 %</div>
<div class="t" style="left:1186px;top:75px;font-size:41px;line-height:46px;-webkit-text-stroke:0.6px #000;transform:scaleX(0.6786);transform-origin:0 0">1.38580 %</div>
<div class="a" style="left:468px;top:5px;width:52px;height:60px;background:linear-gradient(#c2d4e9 0,#d3e1f0 26px,#e8eef5 100%);border:1px solid #59636e;border-bottom:none;border-radius:5px 5px 0 0"></div>
<div class="a" style="left:468px;top:31px;width:4px;height:34px;background:#dce7f3"></div>
<div class="a" style="left:472px;top:30px;width:44px;height:35px;background:#f0f0f0"></div>
<svg class="a" style="left:471px;top:9px" width="16" height="16" viewBox="0 0 16 16" shape-rendering="crispEdges"><rect x="0.5" y="0.5" width="15" height="15" fill="#fff" stroke="#000"/><path d="M2.5 10.5L6.5 5.5L7 10.5L11 5.5L11.5 10.5L14.5 6.5" stroke="#303030" fill="none" shape-rendering="auto" stroke-width="0.8"/></svg>
<div class="a" style="left:484px;top:8px;width:33px;height:19px;background:linear-gradient(#dce6f2,#c5d5e8);border:1px solid #8797ab;border-radius:3px"></div>
<svg class="a" style="left:493px;top:11px" width="15" height="12" viewBox="0 0 15 12"><path d="M3 2l9 8M12 2L3 10" stroke="#556070" stroke-width="4" stroke-linecap="round"/><path d="M3 2l9 8M12 2L3 10" stroke="#fff" stroke-width="2.4" stroke-linecap="round"/></svg>
<div class="a" style="left:473px;top:34px;width:42px;height:26px;background:#f0f0f0;border:1px solid;border-color:#fff #696969 #696969 #fff;box-shadow:inset -1px -1px 0 #a0a0a0"><div class="t" style="left:0;width:40px;text-align:center;top:6px">Stop</div></div>
<svg class="a" style="left:471px;top:9px" width="16" height="16" viewBox="0 0 16 16" shape-rendering="crispEdges"><rect x="0.5" y="0.5" width="15" height="15" fill="#fff" stroke="#000"/><path d="M2.5 10.5L6.5 5.5L7 10.5L11 5.5L11.5 10.5L14.5 6.5" stroke="#303030" fill="none" shape-rendering="auto" stroke-width="0.8"/></svg>
</body></html>
